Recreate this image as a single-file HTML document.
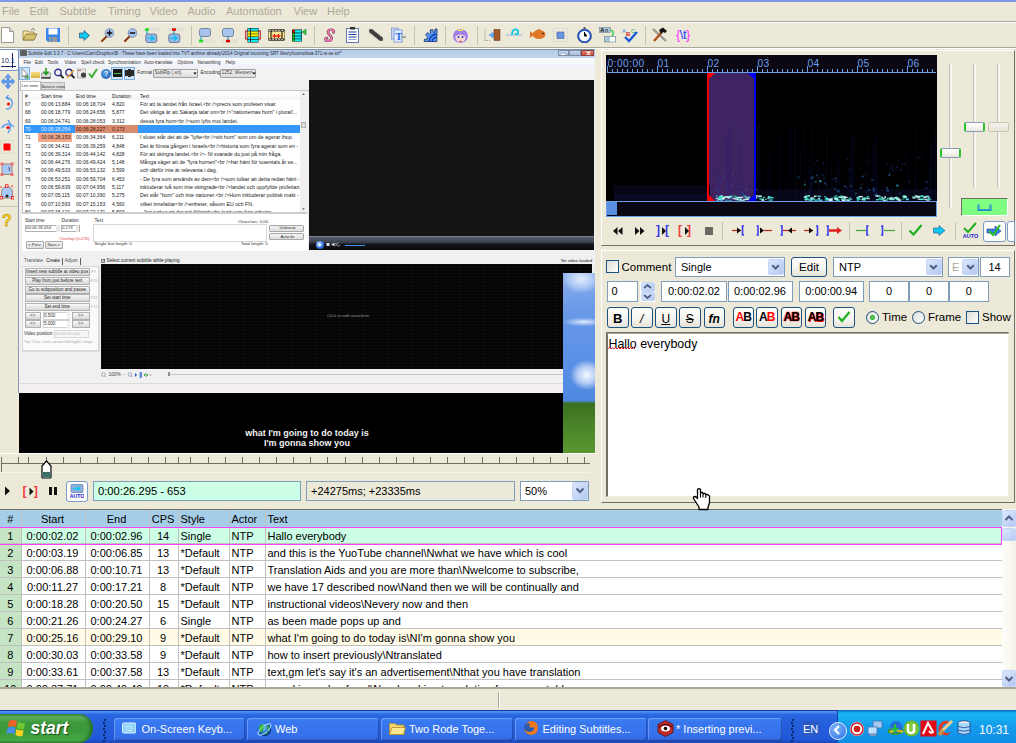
<!DOCTYPE html><html><head><meta charset="utf-8"><style>
html,body{margin:0;padding:0;width:1016px;height:743px;overflow:hidden;background:#ece9d8;font-family:"Liberation Sans",sans-serif;}
div{position:absolute;box-sizing:border-box;}
.t{white-space:nowrap;line-height:1;}
svg{position:absolute;}
</style></head><body>

<div style="left:0px;top:0px;width:1016px;height:2px;background:#7e9ae3"></div>
<div class="t" style="left:2px;top:6px;font-size:11px;color:#aca899">File</div>
<div class="t" style="left:29.5px;top:6px;font-size:11px;color:#aca899">Edit</div>
<div class="t" style="left:59.5px;top:6px;font-size:11px;color:#aca899">Subtitle</div>
<div class="t" style="left:108px;top:6px;font-size:11px;color:#aca899">Timing</div>
<div class="t" style="left:149.5px;top:6px;font-size:11px;color:#aca899">Video</div>
<div class="t" style="left:187.5px;top:6px;font-size:11px;color:#aca899">Audio</div>
<div class="t" style="left:226px;top:6px;font-size:11px;color:#aca899">Automation</div>
<div class="t" style="left:293.5px;top:6px;font-size:11px;color:#aca899">View</div>
<div class="t" style="left:327px;top:6px;font-size:11px;color:#aca899">Help</div>
<div style="left:0px;top:21px;width:1016px;height:1px;background:#aca899"></div>
<div style="left:0px;top:22px;width:1016px;height:1px;background:#fff"></div>
<div style="left:0px;top:47px;width:1016px;height:1px;background:#aca899"></div>
<div style="left:0px;top:48px;width:1016px;height:1px;background:#fff"></div>
<div style="left:68.0px;top:26px;width:1px;height:19px;background:#c5c2b2"></div>
<div style="left:190.5px;top:26px;width:1px;height:19px;background:#c5c2b2"></div>
<div style="left:313.5px;top:26px;width:1px;height:19px;background:#c5c2b2"></div>
<div style="left:413.5px;top:26px;width:1px;height:19px;background:#c5c2b2"></div>
<div style="left:445.0px;top:26px;width:1px;height:19px;background:#c5c2b2"></div>
<div style="left:476.5px;top:26px;width:1px;height:19px;background:#c5c2b2"></div>
<div style="left:645.0px;top:26px;width:1px;height:19px;background:#c5c2b2"></div>
<svg style="left:1px;top:27px" width="13" height="16" viewBox="0 0 13 16"><path d="M0.5 0.5H8.5L12.5 4.5V15.5H0.5Z" fill="#fff" stroke="#9c9a90"/><path d="M8.5 0.5V4.5H12.5" fill="#d8d8e0" stroke="#9c9a90"/></svg>
<svg style="left:22px;top:27px" width="16" height="15" viewBox="0 0 16 15"><path d="M1 4H6L7 5H12V13H1Z" fill="#f3e3a0" stroke="#8f7f40" stroke-width="0.8"/><path d="M1 13L4 7H15L12 13Z" fill="#d6c26e" stroke="#7f6f30" stroke-width="0.8"/><path d="M9 3Q11 0 13 3" fill="none" stroke="#555" stroke-width="0.8"/></svg>
<svg style="left:46px;top:28px" width="14" height="14" viewBox="0 0 14 14"><path d="M0 0H14V14H2L0 12Z" fill="#3c86f0"/><rect x="2.5" y="0.5" width="9" height="6" fill="#fff"/><rect x="3" y="9" width="8" height="5" fill="#9a9a9a"/><rect x="5" y="10" width="1.5" height="3" fill="#3c86f0"/></svg>
<svg style="left:79px;top:30px" width="11" height="11" viewBox="0 0 11 11"><path d="M0.5 3H5V0.5L10.5 5.5L5 10.5V8H0.5Z" fill="#10c8f0" stroke="#205080" stroke-width="0.7"/></svg>
<svg style="left:100px;top:28px" width="14" height="14" viewBox="0 0 14 14"><path d="M2 13L7 8" stroke="#8a3a10" stroke-width="2" stroke-linecap="round"/><circle cx="9.5" cy="5" r="4.3" fill="#a8c4ec" stroke="#6080b0" stroke-width="0.8"/><path d="M6.8 5H12.2" stroke="#000" stroke-width="1.4"/><path d="M9.5 2.3V7.7" stroke="#000" stroke-width="1.4"/></svg>
<svg style="left:123px;top:28px" width="14" height="14" viewBox="0 0 14 14"><path d="M2 13L7 8" stroke="#8a3a10" stroke-width="2" stroke-linecap="round"/><circle cx="9.5" cy="5" r="4.3" fill="#a8c4ec" stroke="#6080b0" stroke-width="0.8"/><path d="M6.8 5H12.2" stroke="#000" stroke-width="1.4"/></svg>
<svg style="left:145px;top:28px" width="16" height="15" viewBox="0 0 16 15"><rect x="0" y="0.5" width="15" height="2" fill="#e8e6de" stroke="#d0cec4" stroke-width="0.5"/><rect x="0" y="0.3" width="4" height="2.5" fill="#20e020"/><path d="M2 3V6" stroke="#10a0d0" stroke-width="1.2"/><rect x="0.8" y="6" width="11" height="8.5" rx="2" fill="#98b8e8" stroke="#506890" stroke-width="0.8"/><path d="M2.5 10.2H8M6 8L9 10.2L6 12.4" stroke="#10c0f0" stroke-width="1.6" fill="none"/></svg>
<svg style="left:168px;top:28px" width="16" height="15" viewBox="0 0 16 15"><rect x="0" y="0.5" width="15" height="2" fill="#e8e6de" stroke="#d0cec4" stroke-width="0.5"/><rect x="4" y="0.3" width="4" height="2.5" fill="#e00000"/><path d="M6 3V6" stroke="#10a0d0" stroke-width="1.2"/><rect x="0.8" y="6" width="11" height="8.5" rx="2" fill="#98b8e8" stroke="#506890" stroke-width="0.8"/><path d="M2.5 10.2H8M6 8L9 10.2L6 12.4" stroke="#10c0f0" stroke-width="1.6" fill="none"/></svg>
<svg style="left:199px;top:28px" width="16" height="15" viewBox="0 0 16 15"><rect x="0.5" y="0.5" width="11" height="8" rx="2" fill="#a8c4ee" stroke="#607090" stroke-width="0.8"/><path d="M2 8.5V12" stroke="#10a0d0" stroke-width="1.2"/><rect x="0" y="12" width="15" height="2" fill="#e8e6de" stroke="#d0cec4" stroke-width="0.5"/><rect x="0" y="11.8" width="4" height="2.5" fill="#20e020"/></svg>
<svg style="left:222px;top:28px" width="16" height="15" viewBox="0 0 16 15"><rect x="0.5" y="0.5" width="11" height="8" rx="2" fill="#a8c4ee" stroke="#607090" stroke-width="0.8"/><path d="M6 8.5V12" stroke="#10a0d0" stroke-width="1.2"/><rect x="0" y="12" width="15" height="2" fill="#e8e6de" stroke="#d0cec4" stroke-width="0.5"/><rect x="4" y="11.8" width="4" height="2.5" fill="#e00000"/></svg>
<svg style="left:245px;top:28px" width="16" height="15" viewBox="0 0 16 15"><rect x="0.7" y="3" width="14.6" height="8" fill="none" stroke="#b02020" stroke-width="1.1"/><rect x="2.5" y="0" width="11" height="14.5" fill="#111"/><g fill="#10e8f0"><rect x="3" y="0.5" width="2.2" height="2.3"/><rect x="6" y="0.5" width="7" height="2.3"/><rect x="3" y="9" width="2.2" height="2.2"/><rect x="6" y="9" width="7" height="2.2"/><rect x="3" y="11.8" width="2.2" height="2.2"/><rect x="6" y="11.8" width="7" height="2.2"/></g><g fill="#f8f000"><rect x="3" y="3.4" width="2.2" height="2.3"/><rect x="6" y="3.4" width="7" height="2.3"/><rect x="3" y="6.2" width="2.2" height="2.3"/><rect x="6" y="6.2" width="7" height="2.3"/></g></svg>
<svg style="left:268px;top:29px" width="17" height="12" viewBox="0 0 17 12"><rect x="0.5" y="0.5" width="16" height="11" rx="1" fill="#f8e890" stroke="#807050" stroke-width="0.8"/><rect x="0.5" y="0.5" width="16" height="2" fill="#333"/><rect x="0.5" y="9.5" width="16" height="2" fill="#333"/><g fill="#fff"><rect x="1.5" y="1" width="1.2" height="1"/><rect x="4.5" y="1" width="1.2" height="1"/><rect x="7.5" y="1" width="1.2" height="1"/><rect x="10.5" y="1" width="1.2" height="1"/><rect x="13.5" y="1" width="1.2" height="1"/><rect x="1.5" y="10" width="1.2" height="1"/><rect x="4.5" y="10" width="1.2" height="1"/><rect x="7.5" y="10" width="1.2" height="1"/><rect x="10.5" y="10" width="1.2" height="1"/><rect x="13.5" y="10" width="1.2" height="1"/></g><path d="M3 2V10M14 2V10" stroke="#000" stroke-width="1"/><path d="M4.5 7H12.5M6.5 5V9M10.5 5V9" stroke="#e02020" stroke-width="1.3"/></svg>
<svg style="left:291px;top:28px" width="16" height="14" viewBox="0 0 16 14"><rect x="1" y="1.5" width="10" height="12" fill="#111"/><g fill="#10e8f0"><rect x="4" y="2.2" width="6.5" height="2.4"/><rect x="4" y="5.3" width="6.5" height="2.4"/><rect x="4" y="8.4" width="6.5" height="2.2"/><rect x="4" y="11.2" width="6.5" height="2"/></g><g fill="#20e020"><rect x="1.5" y="5.3" width="2" height="2.4"/><rect x="1.5" y="8.4" width="2" height="2.2"/><rect x="1.5" y="11.2" width="2" height="2"/></g><rect x="1.5" y="2.2" width="2" height="2.4" fill="#f00"/><path d="M11 4L15 1V7Z" fill="#30d040" stroke="#106010" stroke-width="0.5"/></svg>
<svg style="left:324px;top:28px" width="12" height="14" viewBox="0 0 12 14"><path d="M9.5 4.5Q10.5 2 8 1.8Q4.2 1.5 4 4Q4 6 6 7.5Q8 9 7.5 11Q7 13 4 13Q1.5 13 1.5 11.5Q1.5 10 3 10" fill="none" stroke="#6a3a50" stroke-width="2.6" stroke-linecap="round"/><path d="M9.5 4.5Q10.5 2 8 1.8Q4.2 1.5 4 4Q4 6 6 7.5Q8 9 7.5 11Q7 13 4 13Q1.5 13 1.5 11.5Q1.5 10 3 10" fill="none" stroke="#f878b8" stroke-width="1.5" stroke-linecap="round"/></svg>
<svg style="left:346px;top:27px" width="13" height="16" viewBox="0 0 13 16"><rect x="0.5" y="1.5" width="12" height="14" fill="#fff" stroke="#5070a8" stroke-width="0.9"/><rect x="4" y="0" width="5" height="2.5" fill="#333"/><g stroke="#1840a0" stroke-width="1.2"><path d="M2.5 5H10.5M2.5 7.5H10.5M2.5 10H10.5"/></g><path d="M2.5 12.5H10.5" stroke="#8098c8" stroke-width="0.8"/></svg>
<svg style="left:369px;top:29px" width="14" height="12" viewBox="0 0 14 12"><path d="M2 2L12 10" stroke="#555" stroke-width="4.5" stroke-linecap="round"/><path d="M2 2L12 10" stroke="#222" stroke-width="2.5" stroke-dasharray="1 1"/></svg>
<svg style="left:391px;top:27px" width="16" height="16" viewBox="0 0 16 16"><rect x="0.5" y="1" width="7" height="11" fill="#c8d8f0" stroke="#7090c0" stroke-width="0.7"/><rect x="3" y="3" width="8" height="12" fill="#e0ecff" stroke="#6088d0" stroke-width="0.7"/><text x="4.5" y="13" font-family="Liberation Serif" font-weight="bold" font-size="10" fill="#2060e0">T</text><path d="M10 10H15" stroke="#909090" stroke-width="1.5"/></svg>
<svg style="left:423px;top:28px" width="15" height="14" viewBox="0 0 15 14"><path d="M13.8 13.5H1.2V11.5L4.5 10.8L4.2 8.5L2.5 6.8L4.6 4.6L6.6 6.1L7.6 5.2L7.2 2L9.6 1.5L10.5 4.6L11.6 4.3L12 1H14Z" fill="#5898f8" stroke="#1a2a60" stroke-width="0.8" stroke-linejoin="round"/><path d="M6.2 13.5A7.3 7.3 0 0 1 13.6 6.2" fill="none" stroke="#0a3ab0" stroke-width="1.6"/><path d="M9.2 13.5A4.3 4.3 0 0 1 13.6 9.2" fill="none" stroke="#0a3ab0" stroke-width="1.4"/></svg>
<svg style="left:452px;top:27px" width="17" height="16" viewBox="0 0 17 16"><ellipse cx="8.5" cy="9" rx="7.5" ry="7" fill="#a080e8"/><ellipse cx="8.5" cy="10.5" rx="5" ry="4.8" fill="#f8d8d0"/><path d="M3.5 7 Q8.5 3 13.5 7 L13 9 Q8.5 6 4 9Z" fill="#a080e8"/><circle cx="6.5" cy="10" r="1" fill="#2040c0"/><circle cx="10.5" cy="10" r="1" fill="#2040c0"/><path d="M5 1L8.5 3L12 1L11 4H6Z" fill="#f0e060"/><path d="M7 15L8.5 13.5L10 15" fill="#c02020"/></svg>
<svg style="left:484px;top:29px" width="17" height="12" viewBox="0 0 17 12"><path d="M1 0.5V11.5M1 11.5H6" stroke="#808080" stroke-width="0.8" stroke-dasharray="1 1" fill="none"/><path d="M5 6H9M7.5 3.5L10 6L7.5 8.5" stroke="#60a8f0" stroke-width="2" fill="none"/><rect x="10" y="0.5" width="6" height="11" fill="#a05a28" stroke="#603010" stroke-width="0.5"/></svg>
<svg style="left:506px;top:28px" width="17" height="11" viewBox="0 0 17 11"><path d="M0 7H16" stroke="#7aa8e8" stroke-width="0.8"/><path d="M6 7Q6 1 10 1.5Q13 2 12 5Q11 7 9 5.5" fill="none" stroke="#10c8e0" stroke-width="1.8"/></svg>
<svg style="left:530px;top:29px" width="16" height="11" viewBox="0 0 16 11"><path d="M0 2L4 5.5L0 9Z" fill="#e07020"/><ellipse cx="9" cy="5.5" rx="6.5" ry="4.5" fill="#e07828"/><path d="M6 1L10 0L11 2Z" fill="#e07020"/><circle cx="13" cy="4.5" r="0.8" fill="#000"/></svg>
<svg style="left:553px;top:28px" width="15" height="14" viewBox="0 0 15 14"><rect x="0.5" y="0.5" width="14" height="13" fill="none" stroke="#c8c8c8" stroke-width="0.8" stroke-dasharray="1.2 1.2"/><rect x="4" y="4" width="7" height="6.5" fill="#6a96e0" stroke="#40609a" stroke-width="0.6"/></svg>
<svg style="left:577px;top:27px" width="15" height="16" viewBox="0 0 15 16"><rect x="6.5" y="0" width="2" height="2" fill="#606060"/><circle cx="7.5" cy="9" r="6.2" fill="#fff" stroke="#1e5ae0" stroke-width="1.8"/><circle cx="7.5" cy="9" r="7" fill="none" stroke="#303030" stroke-width="0.5"/><path d="M7.5 5V9H10" stroke="#000" stroke-width="1"/></svg>
<svg style="left:599px;top:26px" width="17" height="17" viewBox="0 0 17 17"><rect x="0.5" y="1.5" width="11" height="5" fill="#a8c8d8" stroke="#607080" stroke-width="0.5"/><text x="1.2" y="6" font-family="Liberation Sans" font-weight="bold" font-size="5.5" fill="#000">A</text><text x="6" y="6" font-family="Liberation Sans" font-size="5.5" fill="#000">n</text><path d="M12 4Q16 6 13 10" stroke="#20d040" stroke-width="1.3" fill="none"/><rect x="5.5" y="10.5" width="11" height="5.5" fill="#a8c8d8" stroke="#607080" stroke-width="0.5"/><rect x="11" y="11" width="5" height="4.5" fill="#fff"/></svg>
<svg style="left:622px;top:27px" width="16" height="16" viewBox="0 0 16 16"><text x="0" y="6" font-family="Liberation Sans" font-size="6" fill="#4090f0">A</text><text x="4" y="9" font-family="Liberation Sans" font-weight="bold" font-size="6" fill="#e02020">B</text><text x="9" y="5.5" font-family="Liberation Sans" font-size="6" fill="#20b040">C</text><path d="M3 10L7 14L15 5" stroke="#1e5ad8" stroke-width="2.4" fill="none"/></svg>
<svg style="left:652px;top:27px" width="16" height="16" viewBox="0 0 16 16"><path d="M1 2L14 14" stroke="#808080" stroke-width="2.2"/><path d="M1 2L14 14" stroke="#c0c0c0" stroke-width="0.8"/><path d="M2 14L10 5" stroke="#b05010" stroke-width="2.2"/><path d="M7 3L11 0.5L15 4L13 6L11 5L9 7Z" fill="#111"/></svg>
<div class="t" style="left:676px;top:28px;font-size:13px;color:#ff30ff;letter-spacing:-0.5px">{<span style="color:#2040ff">\t</span>}</div>
<div style="left:19px;top:49px;width:576px;height:404px;background:#f0f0f0"></div>
<div style="left:18px;top:49px;width:1px;height:344px;background:#8a9ab0"></div>
<div style="left:19px;top:49px;width:576px;height:9px;background:linear-gradient(#b4c8e2,#c4d6ec)"></div>
<div style="left:19px;top:49px;width:576px;height:1px;background:#7890b0"></div>
<div style="left:20px;top:50px;width:7px;height:6px;background:#606060;border-radius:1px"></div>
<div class="t" style="left:28px;top:51.5px;font-size:4.5px;color:#1a2a40">Subtitle Edit 3.3.7 - C:\Users\Cam\Dropbox\B - These have been loaded into TVT archive already\2014 Original incoming SRT files\yt\uomolista-371-w-se.srt*</div>
<div style="left:558px;top:50px;width:11px;height:6px;background:linear-gradient(#c8d8ea,#a8bcd8);border:0.5px solid #8090a8"></div>
<div style="left:561px;top:53.5px;width:4px;height:1px;background:#fff"></div>
<div style="left:569px;top:50px;width:12px;height:6px;background:linear-gradient(#c8d8ea,#a8bcd8);border:0.5px solid #8090a8"></div>
<div style="left:581px;top:50px;width:13px;height:6px;background:linear-gradient(#e08878,#c84838);border:0.5px solid #904040"></div>
<svg style="left:585.5px;top:50.8px" width="5" height="4.5" viewBox="0 0 5 4.5"><path d="M0.8 0.5L4.2 4M4.2 0.5L0.8 4" stroke="#fff" stroke-width="1.1"/></svg>
<div style="left:19px;top:58px;width:576px;height:9px;background:linear-gradient(#fbfcfe,#eef2f8)"></div>
<div class="t" style="left:23.5px;top:60.5px;font-size:4.6px;color:#303030">File</div>
<div class="t" style="left:35px;top:60.5px;font-size:4.6px;color:#303030">Edit</div>
<div class="t" style="left:47.5px;top:60.5px;font-size:4.6px;color:#303030">Tools</div>
<div class="t" style="left:64.5px;top:60.5px;font-size:4.6px;color:#303030">Video</div>
<div class="t" style="left:81px;top:60.5px;font-size:4.6px;color:#303030">Spell check</div>
<div class="t" style="left:108px;top:60.5px;font-size:4.6px;color:#303030">Synchronization</div>
<div class="t" style="left:144px;top:60.5px;font-size:4.6px;color:#303030">Auto-translate</div>
<div class="t" style="left:177.5px;top:60.5px;font-size:4.6px;color:#303030">Options</div>
<div class="t" style="left:197.5px;top:60.5px;font-size:4.6px;color:#303030">Networking</div>
<div class="t" style="left:225.5px;top:60.5px;font-size:4.6px;color:#303030">Help</div>
<div style="left:19px;top:67px;width:576px;height:14px;background:#f2f2f2"></div>
<div style="left:19px;top:67px;width:11px;height:13px;background:#cfe4f8;border:0.5px solid #80b0e0"></div>
<svg style="left:21px;top:68px" width="8" height="11" viewBox="0 0 8 11"><path d="M1 0.5V9L3 7.5L4.5 10.5L5.5 10L4 7H7Z" fill="#fff" stroke="#404040" stroke-width="0.5"/><circle cx="6" cy="9" r="1.8" fill="#40a840"/></svg>
<div style="left:31px;top:72px;width:9px;height:6px;background:linear-gradient(#f8e080,#d8b040);border-radius:0.5px"></div>
<svg style="left:41px;top:68px" width="10" height="11" viewBox="0 0 10 11"><rect x="0.5" y="5" width="9" height="5.5" fill="#d8d8d8" stroke="#606060" stroke-width="0.5"/><path d="M5 0V6M2.5 3.5L5 6.5L7.5 3.5" stroke="#20a020" stroke-width="1.6" fill="none"/><rect x="0.5" y="9" width="9" height="1.5" fill="#404040"/></svg>
<svg style="left:54px;top:68px" width="10" height="11" viewBox="0 0 10 11"><circle cx="4" cy="4.5" r="3.2" fill="none" stroke="#303090" stroke-width="1.4"/><path d="M6.5 7L9.5 10" stroke="#202020" stroke-width="1.8"/></svg>
<svg style="left:65px;top:68px" width="10" height="11" viewBox="0 0 10 11"><circle cx="4" cy="4.5" r="3.2" fill="none" stroke="#303090" stroke-width="1.4"/><path d="M6.5 7L9.5 10" stroke="#202020" stroke-width="1.8"/><path d="M2 10L9 2" stroke="#f0a030" stroke-width="1.2"/></svg>
<svg style="left:77px;top:68px" width="10" height="11" viewBox="0 0 10 11"><rect x="0.5" y="1" width="8" height="9" fill="#e8e8e8" stroke="#808080" stroke-width="0.5"/><circle cx="6.5" cy="7" r="2.6" fill="#404040"/><path d="M1 2.5H4" stroke="#c04040" stroke-width="0.8"/></svg>
<svg style="left:88px;top:68px" width="10" height="11" viewBox="0 0 10 11"><path d="M1 5.5L3.8 9L9 1" stroke="#40b030" stroke-width="2" fill="none"/></svg>
<div style="left:101px;top:68.5px;width:9.5px;height:10px;background:radial-gradient(circle at 40% 35%,#5aa0e8,#1a5aa8);border-radius:50%"></div>
<div class="t" style="left:104px;top:70px;font-size:7px;color:#fff;font-weight:bold">?</div>
<div style="left:111px;top:67px;width:12px;height:13px;background:#cfe4f8;border:0.5px solid #80b0e0"></div>
<div style="left:113px;top:69px;width:9px;height:8px;background:#1a1a1a"></div>
<div style="left:114px;top:73px;width:7px;height:1px;background:#40c040"></div>
<div style="left:123.5px;top:67px;width:11px;height:13px;background:#cfe4f8;border:0.5px solid #80b0e0"></div>
<div style="left:125px;top:69px;width:8.5px;height:8px;background:#2a2a2a;border-top:1.5px dashed #ddd;border-bottom:1.5px dashed #ddd"></div>
<div class="t" style="left:137px;top:71px;font-size:4.8px;color:#303030">Format</div>
<div style="left:152.5px;top:68.5px;width:45px;height:9.5px;background:linear-gradient(#f4f4f4,#dcdcdc);border:0.5px solid #a0a0a0;border-radius:1px"></div>
<div class="t" style="left:154.5px;top:71px;font-size:4.8px;color:#404040">SubRip (.srt)</div>
<svg style="left:193px;top:72px" width="4" height="3" viewBox="0 0 4 3"><path d="M0.3 0.5H3.7L2 2.5Z" fill="#000"/></svg>
<div class="t" style="left:200.5px;top:71px;font-size:4.8px;color:#303030">Encoding</div>
<div style="left:219.5px;top:68.5px;width:36.5px;height:9.5px;background:linear-gradient(#f4f4f4,#dcdcdc);border:0.5px solid #a0a0a0;border-radius:1px"></div>
<div class="t" style="left:221.5px;top:71px;font-size:4.8px;color:#404040">1252: Western</div>
<svg style="left:251.5px;top:72px" width="4" height="3" viewBox="0 0 4 3"><path d="M0.3 0.5H3.7L2 2.5Z" fill="#000"/></svg>
<div style="left:19px;top:81px;width:290px;height:9px;background:#f0f0f0"></div>
<div style="left:20px;top:81px;width:20.5px;height:9px;background:#fff;border:0.5px solid #c0c0c0;border-bottom:none"></div>
<div class="t" style="left:21.5px;top:83.5px;font-size:4.3px;color:#303030">List view</div>
<div style="left:40.5px;top:82px;width:24px;height:8px;background:#dcdcdc;border:0.5px solid #b8b8b8"></div>
<div class="t" style="left:41.5px;top:84.5px;font-size:4.3px;color:#303030">Source view</div>
<div style="left:19px;top:89.5px;width:290px;height:0.6px;background:#c8c8c8"></div>
<div style="left:22px;top:90px;width:284px;height:123px;background:#fff;border:0.5px solid #c8c8c8"></div>
<div style="left:23px;top:91px;width:277px;height:9px;background:linear-gradient(#fff,#f4f4f6)"></div>
<div class="t" style="left:25px;top:93.5px;font-size:5px;color:#222">#</div>
<div class="t" style="left:41px;top:93.5px;font-size:5px;color:#222">Start time</div>
<div class="t" style="left:76px;top:93.5px;font-size:5px;color:#222">End time</div>
<div class="t" style="left:112px;top:93.5px;font-size:5px;color:#222">Duration</div>
<div class="t" style="left:140px;top:93.5px;font-size:5px;color:#222">Text</div>
<div style="left:23px;top:100px;width:277px;height:112px;overflow:hidden">
<div class="t" style="left:2px;top:2.0px;font-size:5px;color:#222">67</div>
<div class="t" style="left:18px;top:2.0px;font-size:5px;color:#222">00:06:13,884</div>
<div class="t" style="left:53px;top:2.0px;font-size:5px;color:#222">00:06:18,704</div>
<div class="t" style="left:89px;top:2.0px;font-size:5px;color:#222">4,820</div>
<div class="t" style="left:117px;top:2.0px;font-size:5.25px;color:#222">För att ta landet från Israel,&lt;br /&gt;precis som profeten visar.</div>
<div class="t" style="left:2px;top:10.31px;font-size:5px;color:#222">68</div>
<div class="t" style="left:18px;top:10.31px;font-size:5px;color:#222">00:06:18,779</div>
<div class="t" style="left:53px;top:10.31px;font-size:5px;color:#222">00:06:24,656</div>
<div class="t" style="left:89px;top:10.31px;font-size:5px;color:#222">5,877</div>
<div class="t" style="left:117px;top:10.31px;font-size:5.25px;color:#222">Det viktiga är att Sakarja talar om&lt;br /&gt;"nationernas horn" i plural!...</div>
<div class="t" style="left:2px;top:18.62px;font-size:5px;color:#222">69</div>
<div class="t" style="left:18px;top:18.62px;font-size:5px;color:#222">00:06:24,741</div>
<div class="t" style="left:53px;top:18.62px;font-size:5px;color:#222">00:06:28,053</div>
<div class="t" style="left:89px;top:18.62px;font-size:5px;color:#222">3,312</div>
<div class="t" style="left:117px;top:18.62px;font-size:5.25px;color:#222">dessa fyra horn&lt;br /&gt;som lyfts mot landet.</div>
<div style="left:1px;top:24.93px;width:276px;height:8.3px;background:#3399ff"></div>
<div style="left:52px;top:24.93px;width:35px;height:8.3px;background:#d98b70"></div>
<div style="left:87px;top:24.93px;width:28px;height:8.3px;background:#d98b70"></div>
<div class="t" style="left:2px;top:26.93px;font-size:5px;color:#e8f0ff">70</div>
<div class="t" style="left:18px;top:26.93px;font-size:5px;color:#e8f0ff">00:06:28,054</div>
<div class="t" style="left:53px;top:26.93px;font-size:5px;color:#402010">00:06:28,227</div>
<div class="t" style="left:89px;top:26.93px;font-size:5px;color:#402010">0,173</div>
<div class="t" style="left:117px;top:26.93px;font-size:5.25px;color:#e8f0ff"></div>
<div style="left:15px;top:33.24px;width:34px;height:8.3px;background:#f4a888"></div>
<div class="t" style="left:2px;top:35.24px;font-size:5px;color:#222">71</div>
<div class="t" style="left:18px;top:35.24px;font-size:5px;color:#222">00:06:28,153</div>
<div class="t" style="left:53px;top:35.24px;font-size:5px;color:#222">00:06:34,364</div>
<div class="t" style="left:89px;top:35.24px;font-size:5px;color:#222">6,211</div>
<div class="t" style="left:117px;top:35.24px;font-size:5.25px;color:#222">I slutet står det att de "lyfte&lt;br /&gt;sitt horn" som om de agerar ihop.</div>
<div class="t" style="left:2px;top:43.550000000000004px;font-size:5px;color:#222">72</div>
<div class="t" style="left:18px;top:43.550000000000004px;font-size:5px;color:#222">00:06:34,411</div>
<div class="t" style="left:53px;top:43.550000000000004px;font-size:5px;color:#222">00:06:39,259</div>
<div class="t" style="left:89px;top:43.550000000000004px;font-size:5px;color:#222">4,848</div>
<div class="t" style="left:117px;top:43.550000000000004px;font-size:5.25px;color:#222">Det är första gången i Israels&lt;br /&gt;historia som fyra agerar som en -</div>
<div class="t" style="left:2px;top:51.86px;font-size:5px;color:#222">73</div>
<div class="t" style="left:18px;top:51.86px;font-size:5px;color:#222">00:06:39,314</div>
<div class="t" style="left:53px;top:51.86px;font-size:5px;color:#222">00:06:44,142</div>
<div class="t" style="left:89px;top:51.86px;font-size:5px;color:#222">4,828</div>
<div class="t" style="left:117px;top:51.86px;font-size:5.25px;color:#222">För att skingra landet.&lt;br /&gt;- Ni svarade du just på min fråga.</div>
<div class="t" style="left:2px;top:60.17px;font-size:5px;color:#222">74</div>
<div class="t" style="left:18px;top:60.17px;font-size:5px;color:#222">00:06:44,276</div>
<div class="t" style="left:53px;top:60.17px;font-size:5px;color:#222">00:06:49,424</div>
<div class="t" style="left:89px;top:60.17px;font-size:5px;color:#222">5,148</div>
<div class="t" style="left:117px;top:60.17px;font-size:5.25px;color:#222">Många säger att de "fyra hornen"&lt;br /&gt;har hänt för tusentals år se...</div>
<div class="t" style="left:2px;top:68.48px;font-size:5px;color:#222">75</div>
<div class="t" style="left:18px;top:68.48px;font-size:5px;color:#222">00:06:49,533</div>
<div class="t" style="left:53px;top:68.48px;font-size:5px;color:#222">00:06:53,132</div>
<div class="t" style="left:89px;top:68.48px;font-size:5px;color:#222">3,599</div>
<div class="t" style="left:117px;top:68.48px;font-size:5.25px;color:#222">och därför inte är relevanta i dag.</div>
<div class="t" style="left:2px;top:76.79px;font-size:5px;color:#222">76</div>
<div class="t" style="left:18px;top:76.79px;font-size:5px;color:#222">00:06:53,251</div>
<div class="t" style="left:53px;top:76.79px;font-size:5px;color:#222">00:06:59,704</div>
<div class="t" style="left:89px;top:76.79px;font-size:5px;color:#222">6,453</div>
<div class="t" style="left:117px;top:76.79px;font-size:5.25px;color:#222">- De fyra som används av dem&lt;br /&gt;som tolkar att detta redan hänt -</div>
<div class="t" style="left:2px;top:85.10000000000001px;font-size:5px;color:#222">77</div>
<div class="t" style="left:18px;top:85.10000000000001px;font-size:5px;color:#222">00:06:59,839</div>
<div class="t" style="left:53px;top:85.10000000000001px;font-size:5px;color:#222">00:07:04,956</div>
<div class="t" style="left:89px;top:85.10000000000001px;font-size:5px;color:#222">5,117</div>
<div class="t" style="left:117px;top:85.10000000000001px;font-size:5.25px;color:#222">inkluderar två som inte skingrade&lt;br /&gt;landet och uppfyllde profetian.</div>
<div class="t" style="left:2px;top:93.41000000000001px;font-size:5px;color:#222">78</div>
<div class="t" style="left:18px;top:93.41000000000001px;font-size:5px;color:#222">00:07:05,115</div>
<div class="t" style="left:53px;top:93.41000000000001px;font-size:5px;color:#222">00:07:10,390</div>
<div class="t" style="left:89px;top:93.41000000000001px;font-size:5px;color:#222">5,275</div>
<div class="t" style="left:117px;top:93.41000000000001px;font-size:5.25px;color:#222">Det står "horn" och inte nationer.&lt;br /&gt;Horn inkluderar politisk makt -</div>
<div class="t" style="left:2px;top:101.72px;font-size:5px;color:#222">79</div>
<div class="t" style="left:18px;top:101.72px;font-size:5px;color:#222">00:07:10,593</div>
<div class="t" style="left:53px;top:101.72px;font-size:5px;color:#222">00:07:15,153</div>
<div class="t" style="left:89px;top:101.72px;font-size:5px;color:#222">4,560</div>
<div class="t" style="left:117px;top:101.72px;font-size:5.25px;color:#222">vilket innefattar&lt;br /&gt;enheter, såsom EU och FN.</div>
<div class="t" style="left:2px;top:110.03px;font-size:5px;color:#222">80</div>
<div class="t" style="left:18px;top:110.03px;font-size:5px;color:#222">00:07:15,121</div>
<div class="t" style="left:53px;top:110.03px;font-size:5px;color:#222">00:07:22,171</div>
<div class="t" style="left:89px;top:110.03px;font-size:5px;color:#222">5,593</div>
<div class="t" style="left:117px;top:110.03px;font-size:5.25px;color:#222">- Jag tycker att det mä följande&lt;br /&gt;att som fyra arbetar</div>
</div>
<div style="left:300px;top:91px;width:5.5px;height:121px;background:#f0f0f0"></div>
<svg style="left:301.5px;top:93px" width="3" height="2.5" viewBox="0 0 3 2.5"><path d="M0.2 2H2.8L1.5 0.3Z" fill="#606060"/></svg>
<svg style="left:301.5px;top:207.5px" width="3" height="2.5" viewBox="0 0 3 2.5"><path d="M0.2 0.3H2.8L1.5 2Z" fill="#606060"/></svg>
<div style="left:300.5px;top:122px;width:5px;height:6px;background:#dcdcdc;border:0.5px solid #b0b0b0"></div>
<div style="left:22px;top:213px;width:286px;height:38px;background:#fff;border-top:0.5px solid #d0d0d0"></div>
<div class="t" style="left:25px;top:219px;font-size:4.6px;color:#303030">Start time</div>
<div class="t" style="left:61.5px;top:219px;font-size:4.6px;color:#303030">Duration</div>
<div style="left:25px;top:224.5px;width:35px;height:7.5px;background:#fff;border:0.5px solid #b0b0b0"></div>
<div class="t" style="left:26px;top:226.3px;font-size:4.3px;color:#303030">00:06:28,054</div>
<div style="left:56px;top:225px;width:3.5px;height:6.5px;background:#e8e8e8"></div>
<div style="left:61px;top:224.5px;width:19px;height:7.5px;background:#fff;border:0.5px solid #b0b0b0"></div>
<div class="t" style="left:62px;top:226.3px;font-size:4.3px;color:#303030">0,173</div>
<div style="left:75.5px;top:225px;width:3.5px;height:6.5px;background:#e8e8e8"></div>
<div class="t" style="left:94.5px;top:219px;font-size:4.6px;color:#303030">Text</div>
<div style="left:93px;top:223.5px;width:174px;height:18.5px;background:#fff;border:0.5px solid #d8d8d8"></div>
<div class="t" style="left:238px;top:219.5px;font-size:4.3px;color:#303030">Chars/sec: 0,00</div>
<div style="left:269px;top:224.5px;width:35px;height:7px;background:linear-gradient(#f4f4f4,#dedede);border:0.5px solid #a8a8a8;border-radius:1px"></div>
<div class="t" style="left:279.5px;top:226.3px;font-size:4.3px;color:#303030">Unbreak</div>
<div style="left:269px;top:233px;width:35px;height:7px;background:linear-gradient(#f4f4f4,#dedede);border:0.5px solid #a8a8a8;border-radius:1px"></div>
<div class="t" style="left:280.5px;top:234.8px;font-size:4.3px;color:#303030">Auto br</div>
<div class="t" style="left:59.5px;top:237px;font-size:4.3px;color:#e04040">Overlap (0,074)</div>
<div style="left:25.5px;top:240.5px;width:18px;height:8px;background:linear-gradient(#f4f4f4,#dedede);border:0.5px solid #a8a8a8;border-radius:1px"></div>
<div class="t" style="left:28px;top:242.5px;font-size:4.3px;color:#303030">&lt; Prev</div>
<div style="left:45px;top:240.5px;width:18px;height:8px;background:linear-gradient(#f4f4f4,#dedede);border:0.5px solid #a8a8a8;border-radius:1px"></div>
<div class="t" style="left:47.5px;top:242.5px;font-size:4.3px;color:#303030">Next &gt;</div>
<div class="t" style="left:94.5px;top:242px;font-size:4.3px;color:#303030">Single line length: 0</div>
<div class="t" style="left:241px;top:242px;font-size:4.3px;color:#303030">Total length: 0</div>
<div style="left:22px;top:250.5px;width:286px;height:0.6px;background:#c8c8c8"></div>
<div style="left:309px;top:80px;width:285px;height:170px;background:#141414"></div>
<div style="left:309px;top:236px;width:285px;height:14px;background:linear-gradient(#5a6274,#3a404c 45%,#14161a 60%,#0a0a0c)"></div>
<div style="left:309px;top:236px;width:285px;height:1px;background:#7a8090"></div>
<div style="left:316px;top:241px;width:7.5px;height:7.5px;background:radial-gradient(circle at 40% 35%,#c0e0ff,#2a6ae0 60%,#1040a0);border-radius:50%"></div>
<svg style="left:318.2px;top:243px" width="4" height="4" viewBox="0 0 4 4"><path d="M0.5 0.3L3.8 2L0.5 3.7Z" fill="#fff"/></svg>
<svg style="left:326px;top:242px" width="15" height="5" viewBox="0 0 15 5"><rect x="0.5" y="1" width="3" height="3" fill="#e0e0e0"/><path d="M5.5 1.8H6.8L8.5 0.5V4.5L6.8 3.2H5.5Z" fill="#e0e0e0"/><path d="M9.5 1.2Q10.3 2.5 9.5 3.8" stroke="#e0e0e0" stroke-width="0.5" fill="none"/><path d="M13.8 2.5A1.6 1.6 0 1 1 12.5 0.9" stroke="#e0e0e0" stroke-width="0.6" fill="none"/></svg>
<div style="left:345px;top:244.5px;width:20px;height:0.8px;background:#4090f0"></div>
<div style="left:19px;top:251px;width:576px;height:142px;background:#f0f0f0"></div>
<div class="t" style="left:24px;top:259px;font-size:4.6px;color:#505050">Translate</div>
<div class="t" style="left:46.3px;top:259px;font-size:4.6px;color:#101010">Create</div>
<div style="left:62.4px;top:257.5px;width:0.6px;height:7px;background:#606060"></div>
<div class="t" style="left:64.8px;top:259px;font-size:4.6px;color:#505050">Adjust</div>
<div style="left:79.6px;top:257.5px;width:0.6px;height:7px;background:#606060"></div>
<div style="left:101.2px;top:258.5px;width:4px;height:4px;background:#fff;border:0.5px solid #808080"></div>
<svg style="left:101.7px;top:259px" width="3" height="3" viewBox="0 0 3 3"><path d="M0.3 1.5L1.2 2.5L2.7 0.3" stroke="#203060" stroke-width="0.6" fill="none"/></svg>
<div class="t" style="left:106.5px;top:259px;font-size:4.7px;color:#202020">Select current subtitle while playing</div>
<div class="t" style="left:561px;top:259px;font-size:4.3px;color:#202020">No video loaded</div>
<div style="left:22px;top:266px;width:77px;height:85px;background:#fafafa;border:0.5px solid #d8d8d8;box-shadow:0.5px 0.5px 0 #c8c8c8"></div>
<div style="left:24.5px;top:268.3px;width:65.5px;height:8px;background:linear-gradient(#f8f8f8,#e8e8e8 50%,#d8d8d8);border:0.5px solid #b0b0b0;border-radius:0.7px"></div>
<div class="t" style="left:24.5px;top:270.2px;width:65.5px;text-align:center;font-size:4.5px;color:#202020">Insert new subtitle at video pos</div>
<div class="t" style="left:91px;top:270.3px;font-size:4px;color:#b0b0b0">F9</div>
<div style="left:24.5px;top:277px;width:65.5px;height:8px;background:linear-gradient(#f8f8f8,#e8e8e8 50%,#d8d8d8);border:0.5px solid #b0b0b0;border-radius:0.7px"></div>
<div class="t" style="left:24.5px;top:278.9px;width:65.5px;text-align:center;font-size:4.5px;color:#202020">Play from just before text</div>
<div class="t" style="left:91px;top:279px;font-size:4px;color:#b0b0b0">F10</div>
<div style="left:24.5px;top:285.7px;width:65.5px;height:8px;background:linear-gradient(#f8f8f8,#e8e8e8 50%,#d8d8d8);border:0.5px solid #b0b0b0;border-radius:0.7px"></div>
<div class="t" style="left:24.5px;top:287.59999999999997px;width:65.5px;text-align:center;font-size:4.5px;color:#202020">Go to subposition and pause</div>
<div style="left:24.5px;top:294.4px;width:65.5px;height:8px;background:linear-gradient(#f8f8f8,#e8e8e8 50%,#d8d8d8);border:0.5px solid #b0b0b0;border-radius:0.7px"></div>
<div class="t" style="left:24.5px;top:296.29999999999995px;width:65.5px;text-align:center;font-size:4.5px;color:#202020">Set start time</div>
<div class="t" style="left:91px;top:296.4px;font-size:4px;color:#b0b0b0">F11</div>
<div style="left:24.5px;top:303.1px;width:65.5px;height:8px;background:linear-gradient(#f8f8f8,#e8e8e8 50%,#d8d8d8);border:0.5px solid #b0b0b0;border-radius:0.7px"></div>
<div class="t" style="left:24.5px;top:305.0px;width:65.5px;text-align:center;font-size:4.5px;color:#202020">Set end time</div>
<div class="t" style="left:91px;top:305.1px;font-size:4px;color:#b0b0b0">F12</div>
<div style="left:24.5px;top:311.5px;width:16.5px;height:8px;background:linear-gradient(#f8f8f8,#e8e8e8 50%,#d8d8d8);border:0.5px solid #b0b0b0"></div>
<div class="t" style="left:30px;top:313.5px;font-size:4.5px;color:#303030">&lt;&lt;</div>
<div style="left:43.3px;top:311.5px;width:27.2px;height:8px;background:#fff;border:0.5px solid #d0d0d0"></div>
<div class="t" style="left:44px;top:313.5px;font-size:4.5px;color:#303030">0,500</div>
<div style="left:67px;top:312.0px;width:3px;height:7px;background:#f0f0f0"></div>
<div style="left:72.3px;top:311.5px;width:17.6px;height:8px;background:linear-gradient(#f8f8f8,#e8e8e8 50%,#d8d8d8);border:0.5px solid #b0b0b0"></div>
<div class="t" style="left:78px;top:313.5px;font-size:4.5px;color:#303030">&gt;&gt;</div>
<div style="left:24.5px;top:320.3px;width:16.5px;height:8px;background:linear-gradient(#f8f8f8,#e8e8e8 50%,#d8d8d8);border:0.5px solid #b0b0b0"></div>
<div class="t" style="left:30px;top:322.3px;font-size:4.5px;color:#303030">&lt;&lt;</div>
<div style="left:43.3px;top:320.3px;width:27.2px;height:8px;background:#fff;border:0.5px solid #d0d0d0"></div>
<div class="t" style="left:44px;top:322.3px;font-size:4.5px;color:#303030">5,000</div>
<div style="left:67px;top:320.8px;width:3px;height:7px;background:#f0f0f0"></div>
<div style="left:72.3px;top:320.3px;width:17.6px;height:8px;background:linear-gradient(#f8f8f8,#e8e8e8 50%,#d8d8d8);border:0.5px solid #b0b0b0"></div>
<div class="t" style="left:78px;top:322.3px;font-size:4.5px;color:#303030">&gt;&gt;</div>
<div class="t" style="left:24px;top:332.3px;font-size:4.5px;color:#303030">Video position:</div>
<div style="left:54px;top:330px;width:34.7px;height:8px;background:#f6f6f6;border:0.5px solid #d8d8d8"></div>
<div class="t" style="left:55px;top:332.3px;font-size:4.3px;color:#b8b8b8">00:00:00,000</div>
<div class="t" style="left:24px;top:340.3px;font-size:4.4px;color:#a8a8a8">Tip: Use &lt;ctrl+arrow left/right&gt; keys</div>
<div style="left:101px;top:264px;width:491px;height:105px;background:#040404;background-image:linear-gradient(rgba(28,28,28,.22) 1px,transparent 1px),linear-gradient(90deg,rgba(28,28,28,.22) 1px,transparent 1px);background-size:3px 3px"></div>
<div class="t" style="left:327px;top:314px;font-size:4.3px;color:#909090">Click to add waveform</div>
<svg style="left:101px;top:372px" width="70" height="6" viewBox="0 0 70 6"><circle cx="2.5" cy="2.5" r="1.8" fill="none" stroke="#8090a0" stroke-width="0.7"/><path d="M3.8 3.8L5 5" stroke="#8090a0" stroke-width="0.8"/><circle cx="29" cy="2.5" r="1.8" fill="none" stroke="#8090a0" stroke-width="0.7"/><path d="M30.3 3.8L31.5 5" stroke="#8090a0" stroke-width="0.8"/><path d="M34 1L36 3L34 5Z" fill="#2050d0"/><rect x="38.5" y="0" width="2.5" height="6" fill="#6090e0"/><path d="M43 3H47M43 3L44.5 1.5M43 3L44.5 4.5M47 3L45.5 1.5M47 3L45.5 4.5" stroke="#40a040" stroke-width="0.9"/><path d="M48.5 2.5L49.5 3.5L50.5 2.5" stroke="#404040" stroke-width="0.5" fill="none"/></svg>
<div class="t" style="left:108.5px;top:373px;font-size:4.8px;color:#404040">100%</div>
<div class="t" style="left:123.5px;top:372.5px;font-size:4.8px;color:#404040">-</div>
<div style="left:167.5px;top:372px;width:2px;height:4px;background:#e0e0e0;border:0.5px solid #909090"></div>
<div style="left:170px;top:374px;width:420px;height:0.6px;background:#c8c8c8"></div>
<div style="left:19px;top:382.5px;width:576px;height:1px;background:#dcdcdc"></div>
<div style="left:19px;top:383.5px;width:576px;height:9.5px;background:#f3eff0"></div>
<div style="left:19px;top:393px;width:544px;height:60px;background:#000"></div>
<div class="t" style="left:19px;top:428px;width:576px;text-align:center;font-size:9px;font-weight:bold;color:#f0f0f0;line-height:10.2px">what I'm going to do today is<br>I'm gonna show you</div>
<div style="left:563px;top:273px;width:31.5px;height:180px;overflow:hidden;background:linear-gradient(#8cb0ec 0%,#6a9ae8 20%,#5a90e6 50%,#5088e0 71%,#3a7020 72.5%,#4a8428 85%,#5a9830 100%)">
<div style="left:-5px;top:-8px;width:42px;height:36px;background:radial-gradient(ellipse 55% 45% at 55% 40%,rgba(240,248,255,.85),rgba(230,240,255,.45) 50%,rgba(255,255,255,0) 85%)"></div>
<div style="left:-3px;top:41px;width:40px;height:16px;background:radial-gradient(ellipse 60% 30% at 60% 50%,rgba(255,255,255,.8),rgba(255,255,255,.3) 55%,rgba(255,255,255,0) 90%)"></div>
<div style="left:-1px;top:77px;width:38px;height:50px;background:radial-gradient(ellipse 55% 38% at 65% 50%,rgba(255,255,255,.95),rgba(240,245,255,.6) 45%,rgba(255,255,255,0) 80%)"></div>
</div>
<div style="left:-2px;top:49px;width:21px;height:22px;background:#fff;border:1px solid #7a96c0;border-radius:3px"></div>
<div class="t" style="left:1px;top:57px;font-size:7px;color:#1a2a60">10.1</div>
<div style="left:1px;top:66px;width:15px;height:1px;background:#1a2a60"></div>
<div style="left:12px;top:53px;width:1px;height:15px;background:#1a2a60"></div>
<svg style="left:1px;top:74px" width="14" height="15" viewBox="0 0 14 15"><path d="M7 0L10 3.5H8.2V6.3H11V4.5L14 7.5L11 10.5V8.7H8.2V11.5H10L7 15L4 11.5H5.8V8.7H3V10.5L0 7.5L3 4.5V6.3H5.8V3.5H4Z" fill="#5c9cf0" stroke="#3a70c0" stroke-width="0.4"/></svg>
<svg style="left:3px;top:95px" width="12" height="16" viewBox="0 0 12 16"><path d="M4 2.5A5.5 5.5 0 1 1 3 14" fill="none" stroke="#5c9cf0" stroke-width="1.4"/><path d="M5.5 0L3 2.8L6 4.5" fill="none" stroke="#5c9cf0" stroke-width="1.2"/><circle cx="5.5" cy="9" r="1.5" fill="#e00"/></svg>
<svg style="left:1px;top:118px" width="14" height="16" viewBox="0 0 14 16"><path d="M1 9Q7 3 13 9" fill="none" stroke="#5c9cf0" stroke-width="1.3"/><path d="M7 2Q12 8 7 15" fill="none" stroke="#5c9cf0" stroke-width="1.3"/><circle cx="7" cy="9.5" r="1.6" fill="#e00"/><path d="M0.5 10.5L1.2 8L3.5 9.5" fill="none" stroke="#5c9cf0" stroke-width="1"/></svg>
<svg style="left:0px;top:140px" width="14" height="15" viewBox="0 0 14 15"><rect x="0.5" y="0.5" width="13" height="13" fill="none" stroke="#c8c4b0" stroke-width="0.8" stroke-dasharray="1 1.5"/><rect x="3.5" y="3.5" width="7" height="7" fill="#f00"/></svg>
<svg style="left:0px;top:162px" width="14" height="15" viewBox="0 0 14 15"><rect x="2" y="2" width="10" height="10.5" fill="#a8c8f8" stroke="#a07050" stroke-width="0.8"/><circle cx="2" cy="2" r="1.8" fill="#f07070"/><circle cx="12" cy="2" r="1.8" fill="#f07070"/><circle cx="2" cy="12.5" r="1.8" fill="#f07070"/><circle cx="12" cy="12.5" r="1.8" fill="#f07070"/><path d="M9 5Q10 7 9 9" stroke="#333" stroke-width="0.8" fill="none"/></svg>
<svg style="left:0px;top:184px" width="14" height="16" viewBox="0 0 14 16"><path d="M1.5 14V8A5.5 5.5 0 0 1 12.5 8V14Z" fill="#a8c8f8" stroke="#a07050" stroke-width="0.8"/><circle cx="7" cy="12" r="1.5" fill="#222"/><rect x="0" y="12.5" width="2.5" height="2.5" fill="#fff" stroke="#e00" stroke-width="0.8"/><rect x="11.5" y="12.5" width="2.5" height="2.5" fill="#fff" stroke="#e00" stroke-width="0.8"/><rect x="5.5" y="0.8" width="2.5" height="2.5" fill="#fff" stroke="#e00" stroke-width="0.8"/><path d="M0 3H2M11 2H13" stroke="#e00" stroke-width="0.8"/></svg>
<div style="left:0px;top:206px;width:18px;height:1px;background:#c8c4b0"></div>
<div class="t" style="left:2px;top:213px;font-size:16px;color:#f8d020;font-weight:bold;-webkit-text-stroke:0.5px #b89000">?</div>
<div style="left:0px;top:453px;width:597px;height:1px;background:#fff"></div>
<div style="left:1px;top:457px;width:1px;height:6px;background:#716f64"></div>
<div style="left:18px;top:457px;width:1px;height:6px;background:#716f64"></div>
<div style="left:28px;top:457px;width:1px;height:6px;background:#716f64"></div>
<div style="left:46px;top:457px;width:1px;height:6px;background:#716f64"></div>
<div style="left:63px;top:457px;width:1px;height:6px;background:#716f64"></div>
<div style="left:80px;top:457px;width:1px;height:6px;background:#716f64"></div>
<div style="left:97px;top:457px;width:1px;height:6px;background:#716f64"></div>
<div style="left:114px;top:457px;width:1px;height:6px;background:#716f64"></div>
<div style="left:131px;top:457px;width:1px;height:6px;background:#716f64"></div>
<div style="left:148px;top:457px;width:1px;height:6px;background:#716f64"></div>
<div style="left:165px;top:457px;width:1px;height:6px;background:#716f64"></div>
<div style="left:178px;top:457px;width:1px;height:6px;background:#716f64"></div>
<div style="left:190px;top:457px;width:1px;height:6px;background:#716f64"></div>
<div style="left:208px;top:457px;width:1px;height:6px;background:#716f64"></div>
<div style="left:225px;top:457px;width:1px;height:6px;background:#716f64"></div>
<div style="left:242px;top:457px;width:1px;height:6px;background:#716f64"></div>
<div style="left:259px;top:457px;width:1px;height:6px;background:#716f64"></div>
<div style="left:276px;top:457px;width:1px;height:6px;background:#716f64"></div>
<div style="left:293px;top:457px;width:1px;height:6px;background:#716f64"></div>
<div style="left:310px;top:457px;width:1px;height:6px;background:#716f64"></div>
<div style="left:327px;top:457px;width:1px;height:6px;background:#716f64"></div>
<div style="left:345px;top:457px;width:1px;height:6px;background:#716f64"></div>
<div style="left:362px;top:457px;width:1px;height:6px;background:#716f64"></div>
<div style="left:379px;top:457px;width:1px;height:6px;background:#716f64"></div>
<div style="left:396px;top:457px;width:1px;height:6px;background:#716f64"></div>
<div style="left:413px;top:457px;width:1px;height:6px;background:#716f64"></div>
<div style="left:430px;top:457px;width:1px;height:6px;background:#716f64"></div>
<div style="left:447px;top:457px;width:1px;height:6px;background:#716f64"></div>
<div style="left:464px;top:457px;width:1px;height:6px;background:#716f64"></div>
<div style="left:482px;top:457px;width:1px;height:6px;background:#716f64"></div>
<div style="left:499px;top:457px;width:1px;height:6px;background:#716f64"></div>
<div style="left:516px;top:457px;width:1px;height:6px;background:#716f64"></div>
<div style="left:533px;top:457px;width:1px;height:6px;background:#716f64"></div>
<div style="left:550px;top:457px;width:1px;height:6px;background:#716f64"></div>
<div style="left:567px;top:457px;width:1px;height:6px;background:#716f64"></div>
<div style="left:584px;top:457px;width:1px;height:6px;background:#716f64"></div>
<div style="left:1px;top:463px;width:589px;height:1px;background:#716f64"></div>
<div style="left:1px;top:457px;width:1px;height:15px;background:#716f64"></div>
<div style="left:0px;top:472px;width:590px;height:1px;background:#f4f2ea"></div>
<svg style="left:41px;top:458px" width="11" height="21" viewBox="0 0 11 21"><path d="M1 8L5.5 3L10 8V19Q10 20 9 20H2Q1 20 1 19Z" fill="#fff" stroke="#000" stroke-width="1.2"/><rect x="1.6" y="14" width="7.8" height="5.4" fill="#3a706a"/></svg>
<svg style="left:4px;top:486px" width="7" height="10" viewBox="0 0 7 10"><path d="M1 0.5L6 5L1 9.5Z" fill="#111"/></svg>
<div class="t" style="left:22.5px;top:484.5px;font-size:12.5px;color:#f04040;font-weight:bold;letter-spacing:-1px">[<span style="display:inline-block;width:8px"></span>]</div>
<svg style="left:29px;top:487px" width="5" height="9" viewBox="0 0 5 9"><path d="M0.5 0.5L4.5 4.5L0.5 8.5Z" fill="#111"/></svg>
<div style="left:49px;top:486.5px;width:2.5px;height:8.5px;background:#111"></div>
<div style="left:54px;top:486.5px;width:2.5px;height:8.5px;background:#111"></div>
<div style="left:65.5px;top:480.5px;width:22.5px;height:21px;background:#fdfdfb;border:1px solid #7a9ac8;border-radius:3px"></div>
<svg style="left:70px;top:484px" width="14" height="16" viewBox="0 0 14 16"><rect x="1" y="0.5" width="12" height="8" rx="1" fill="#8eb0dc" stroke="#4a6a9a" stroke-width="0.6"/><path d="M3 4.5H9M7 2.5L9.5 4.5L7 6.5" stroke="#10c8f0" stroke-width="1.4" fill="none"/><text x="7" y="14" text-anchor="middle" font-family="Liberation Sans" font-weight="bold" font-size="5.2" fill="#2020d0">AUTO</text></svg>
<div style="left:93px;top:481px;width:208px;height:20px;background:#ccffe5;border:1px solid #7f9db9"></div>
<div class="t" style="left:98px;top:486px;font-size:11.2px;color:#000">0:00:26.295 - 653</div>
<div style="left:306px;top:481px;width:209px;height:20px;background:#ece9d8;border:1px solid #7f9db9"></div>
<div class="t" style="left:311px;top:486px;font-size:11px;color:#000">+24275ms; +23335ms</div>
<div style="left:520px;top:481px;width:69px;height:20px;background:#fff;border:1px solid #7f9db9"></div>
<div class="t" style="left:525px;top:486px;font-size:11px;color:#000">50%</div>
<div style="left:572px;top:482px;width:16px;height:18px;background:linear-gradient(135deg,#dce8fc,#b2c8f4);border:1px solid #c4d4f4;border-radius:2px"></div>
<svg style="left:575px;top:487px" width="10" height="7" viewBox="0 0 10 7"><path d="M1.5 1.5L5 5L8.5 1.5" stroke="#4d6185" stroke-width="2" fill="none"/></svg>
<div style="left:601px;top:50px;width:414px;height:196px;border-left:1px solid #fff;border-top:1px solid #fff;border-right:1px solid #716f64;border-bottom:1px solid #716f64"></div>
<div style="left:597px;top:48px;width:1px;height:650px;background:transparent"></div>
<div style="left:606px;top:55px;width:331px;height:162px;background:#000"></div>
<div style="left:606px;top:55px;width:331px;height:18px;background:#0b0814"></div>
<div style="left:607px;top:72px;width:329px;height:1px;background:#6a9ee8"></div>
<div style="left:607px;top:66px;width:1px;height:6px;background:#6a9ee8"></div>
<div style="left:612px;top:69px;width:1px;height:3px;background:#6a9ee8"></div>
<div style="left:617px;top:69px;width:1px;height:3px;background:#6a9ee8"></div>
<div style="left:622px;top:69px;width:1px;height:3px;background:#6a9ee8"></div>
<div style="left:627px;top:69px;width:1px;height:3px;background:#6a9ee8"></div>
<div style="left:632px;top:69px;width:1px;height:3px;background:#6a9ee8"></div>
<div style="left:637px;top:69px;width:1px;height:3px;background:#6a9ee8"></div>
<div style="left:642px;top:69px;width:1px;height:3px;background:#6a9ee8"></div>
<div style="left:647px;top:69px;width:1px;height:3px;background:#6a9ee8"></div>
<div style="left:652px;top:69px;width:1px;height:3px;background:#6a9ee8"></div>
<div style="left:657px;top:66px;width:1px;height:6px;background:#6a9ee8"></div>
<div style="left:662px;top:69px;width:1px;height:3px;background:#6a9ee8"></div>
<div style="left:667px;top:69px;width:1px;height:3px;background:#6a9ee8"></div>
<div style="left:672px;top:69px;width:1px;height:3px;background:#6a9ee8"></div>
<div style="left:677px;top:69px;width:1px;height:3px;background:#6a9ee8"></div>
<div style="left:682px;top:69px;width:1px;height:3px;background:#6a9ee8"></div>
<div style="left:687px;top:69px;width:1px;height:3px;background:#6a9ee8"></div>
<div style="left:692px;top:69px;width:1px;height:3px;background:#6a9ee8"></div>
<div style="left:697px;top:69px;width:1px;height:3px;background:#6a9ee8"></div>
<div style="left:702px;top:69px;width:1px;height:3px;background:#6a9ee8"></div>
<div style="left:707px;top:66px;width:1px;height:6px;background:#6a9ee8"></div>
<div style="left:712px;top:69px;width:1px;height:3px;background:#6a9ee8"></div>
<div style="left:717px;top:69px;width:1px;height:3px;background:#6a9ee8"></div>
<div style="left:722px;top:69px;width:1px;height:3px;background:#6a9ee8"></div>
<div style="left:727px;top:69px;width:1px;height:3px;background:#6a9ee8"></div>
<div style="left:732px;top:69px;width:1px;height:3px;background:#6a9ee8"></div>
<div style="left:737px;top:69px;width:1px;height:3px;background:#6a9ee8"></div>
<div style="left:742px;top:69px;width:1px;height:3px;background:#6a9ee8"></div>
<div style="left:747px;top:69px;width:1px;height:3px;background:#6a9ee8"></div>
<div style="left:752px;top:69px;width:1px;height:3px;background:#6a9ee8"></div>
<div style="left:757px;top:66px;width:1px;height:6px;background:#6a9ee8"></div>
<div style="left:762px;top:69px;width:1px;height:3px;background:#6a9ee8"></div>
<div style="left:767px;top:69px;width:1px;height:3px;background:#6a9ee8"></div>
<div style="left:772px;top:69px;width:1px;height:3px;background:#6a9ee8"></div>
<div style="left:777px;top:69px;width:1px;height:3px;background:#6a9ee8"></div>
<div style="left:782px;top:69px;width:1px;height:3px;background:#6a9ee8"></div>
<div style="left:787px;top:69px;width:1px;height:3px;background:#6a9ee8"></div>
<div style="left:792px;top:69px;width:1px;height:3px;background:#6a9ee8"></div>
<div style="left:797px;top:69px;width:1px;height:3px;background:#6a9ee8"></div>
<div style="left:802px;top:69px;width:1px;height:3px;background:#6a9ee8"></div>
<div style="left:807px;top:66px;width:1px;height:6px;background:#6a9ee8"></div>
<div style="left:812px;top:69px;width:1px;height:3px;background:#6a9ee8"></div>
<div style="left:817px;top:69px;width:1px;height:3px;background:#6a9ee8"></div>
<div style="left:822px;top:69px;width:1px;height:3px;background:#6a9ee8"></div>
<div style="left:827px;top:69px;width:1px;height:3px;background:#6a9ee8"></div>
<div style="left:832px;top:69px;width:1px;height:3px;background:#6a9ee8"></div>
<div style="left:837px;top:69px;width:1px;height:3px;background:#6a9ee8"></div>
<div style="left:842px;top:69px;width:1px;height:3px;background:#6a9ee8"></div>
<div style="left:847px;top:69px;width:1px;height:3px;background:#6a9ee8"></div>
<div style="left:852px;top:69px;width:1px;height:3px;background:#6a9ee8"></div>
<div style="left:857px;top:66px;width:1px;height:6px;background:#6a9ee8"></div>
<div style="left:862px;top:69px;width:1px;height:3px;background:#6a9ee8"></div>
<div style="left:867px;top:69px;width:1px;height:3px;background:#6a9ee8"></div>
<div style="left:872px;top:69px;width:1px;height:3px;background:#6a9ee8"></div>
<div style="left:877px;top:69px;width:1px;height:3px;background:#6a9ee8"></div>
<div style="left:882px;top:69px;width:1px;height:3px;background:#6a9ee8"></div>
<div style="left:887px;top:69px;width:1px;height:3px;background:#6a9ee8"></div>
<div style="left:892px;top:69px;width:1px;height:3px;background:#6a9ee8"></div>
<div style="left:897px;top:69px;width:1px;height:3px;background:#6a9ee8"></div>
<div style="left:902px;top:69px;width:1px;height:3px;background:#6a9ee8"></div>
<div style="left:907px;top:66px;width:1px;height:6px;background:#6a9ee8"></div>
<div style="left:912px;top:69px;width:1px;height:3px;background:#6a9ee8"></div>
<div style="left:917px;top:69px;width:1px;height:3px;background:#6a9ee8"></div>
<div style="left:922px;top:69px;width:1px;height:3px;background:#6a9ee8"></div>
<div style="left:927px;top:69px;width:1px;height:3px;background:#6a9ee8"></div>
<div style="left:932px;top:69px;width:1px;height:3px;background:#6a9ee8"></div>
<div class="t" style="left:607.5px;top:58.8px;font-size:10.2px;color:#6a9ee8;letter-spacing:0.45px">0:00:00</div>
<div class="t" style="left:657.5px;top:58.8px;font-size:10.2px;color:#6a9ee8;letter-spacing:0.45px">01</div>
<div class="t" style="left:707.5px;top:58.8px;font-size:10.2px;color:#6a9ee8;letter-spacing:0.45px">02</div>
<div class="t" style="left:757.5px;top:58.8px;font-size:10.2px;color:#6a9ee8;letter-spacing:0.45px">03</div>
<div class="t" style="left:807.5px;top:58.8px;font-size:10.2px;color:#6a9ee8;letter-spacing:0.45px">04</div>
<div class="t" style="left:857.5px;top:58.8px;font-size:10.2px;color:#6a9ee8;letter-spacing:0.45px">05</div>
<div class="t" style="left:907.5px;top:58.8px;font-size:10.2px;color:#6a9ee8;letter-spacing:0.45px">06</div>
<svg style="left:606px;top:73px" width="331" height="128" viewBox="0 0 331 128"><rect x="103" y="0" width="47" height="128" fill="#3f2462"/><rect x="8" y="112" width="96" height="16" fill="#060614"/><rect x="8" y="121" width="96" height="6" fill="#0a0a26"/><rect x="150" y="116" width="181" height="12" fill="#060614"/><rect x="205.8" y="52.9" width="1.2" height="75.1" fill="#1a2080" opacity="0.11"/><rect x="218.3" y="101.0" width="1.2" height="27.0" fill="#1a2080" opacity="0.12"/><rect x="245.7" y="106.9" width="1.4" height="21.1" fill="#1a2080" opacity="0.09"/><rect x="124.4" y="67.9" width="1.4" height="60.1" fill="#1a2080" opacity="0.06"/><rect x="325.0" y="70.5" width="1.6" height="57.5" fill="#1a2080" opacity="0.13"/><rect x="139.4" y="78.7" width="0.6" height="49.3" fill="#1a2080" opacity="0.06"/><rect x="146.8" y="111.0" width="0.8" height="17.0" fill="#1a2080" opacity="0.11"/><rect x="203.1" y="79.3" width="1.4" height="48.7" fill="#1a2080" opacity="0.13"/><rect x="216.4" y="83.3" width="1.3" height="44.7" fill="#1a2080" opacity="0.09"/><rect x="328.5" y="58.4" width="1.6" height="69.6" fill="#1a2080" opacity="0.14"/><rect x="174.9" y="94.2" width="0.8" height="33.8" fill="#1a2080" opacity="0.06"/><rect x="276.4" y="58.0" width="1.0" height="70.0" fill="#1a2080" opacity="0.10"/><rect x="319.6" y="113.0" width="1.4" height="15.0" fill="#1a2080" opacity="0.08"/><rect x="308.8" y="49.3" width="1.1" height="78.7" fill="#1a2080" opacity="0.10"/><rect x="120.4" y="62.4" width="1.2" height="65.6" fill="#1a2080" opacity="0.09"/><rect x="123.6" y="50.3" width="0.9" height="77.7" fill="#1a2080" opacity="0.15"/><rect x="130.5" y="106.4" width="0.8" height="21.6" fill="#1a2080" opacity="0.06"/><rect x="283.3" y="76.6" width="0.8" height="51.4" fill="#1a2080" opacity="0.11"/><rect x="146.9" y="104.5" width="1.3" height="23.5" fill="#1a2080" opacity="0.13"/><rect x="130.2" y="99.2" width="1.0" height="28.8" fill="#1a2080" opacity="0.09"/><rect x="322.5" y="93.2" width="1.4" height="34.8" fill="#1a2080" opacity="0.17"/><rect x="151.4" y="57.5" width="1.0" height="70.5" fill="#1a2080" opacity="0.13"/><rect x="126.6" y="99.1" width="1.6" height="28.9" fill="#1a2080" opacity="0.08"/><rect x="277.9" y="93.7" width="0.9" height="34.3" fill="#1a2080" opacity="0.06"/><rect x="124.3" y="97.2" width="1.2" height="30.8" fill="#1a2080" opacity="0.13"/><rect x="187.6" y="50.7" width="1.1" height="77.3" fill="#1a2080" opacity="0.11"/><rect x="233.3" y="101.1" width="1.5" height="26.9" fill="#1a2080" opacity="0.07"/><rect x="308.4" y="96.8" width="1.4" height="31.2" fill="#1a2080" opacity="0.07"/><rect x="270.4" y="100.2" width="1.5" height="27.8" fill="#1a2080" opacity="0.17"/><rect x="302.5" y="85.6" width="1.2" height="42.4" fill="#1a2080" opacity="0.06"/><rect x="112.7" y="97.5" width="1.6" height="30.5" fill="#1a2080" opacity="0.14"/><rect x="161.8" y="74.2" width="1.4" height="53.8" fill="#1a2080" opacity="0.09"/><rect x="143.5" y="108.5" width="1.3" height="19.5" fill="#1a2080" opacity="0.08"/><rect x="229.9" y="73.1" width="1.5" height="54.9" fill="#1a2080" opacity="0.09"/><rect x="310.4" y="111.9" width="0.8" height="16.1" fill="#1a2080" opacity="0.08"/><rect x="204.3" y="101.5" width="0.7" height="26.5" fill="#1a2080" opacity="0.10"/><rect x="232.7" y="89.5" width="0.7" height="38.5" fill="#1a2080" opacity="0.17"/><rect x="324.6" y="68.1" width="1.3" height="59.9" fill="#1a2080" opacity="0.13"/><rect x="135.6" y="111.8" width="0.6" height="16.2" fill="#1a2080" opacity="0.17"/><rect x="261.7" y="111.6" width="1.6" height="16.4" fill="#1a2080" opacity="0.13"/><rect x="212.5" y="92.3" width="1.3" height="35.7" fill="#1a2080" opacity="0.18"/><rect x="120.9" y="65.1" width="1.1" height="62.9" fill="#1a2080" opacity="0.17"/><rect x="269.8" y="61.4" width="1.3" height="66.6" fill="#1a2080" opacity="0.17"/><rect x="183.2" y="54.4" width="1.3" height="73.6" fill="#1a2080" opacity="0.16"/><rect x="197.9" y="56.9" width="1.4" height="71.1" fill="#1a2080" opacity="0.12"/><rect x="244.6" y="75.1" width="1.0" height="52.9" fill="#1a2080" opacity="0.13"/><rect x="122.0" y="48.4" width="1.2" height="79.6" fill="#1a2080" opacity="0.16"/><rect x="267.8" y="65.2" width="1.0" height="62.8" fill="#1a2080" opacity="0.13"/><rect x="203.1" y="107.6" width="1.4" height="20.4" fill="#1a2080" opacity="0.15"/><rect x="110.7" y="81.7" width="1.2" height="46.3" fill="#1a2080" opacity="0.08"/><rect x="261.1" y="73.1" width="1.1" height="54.9" fill="#1a2080" opacity="0.17"/><rect x="161.6" y="93.4" width="0.6" height="34.6" fill="#1a2080" opacity="0.14"/><rect x="149.6" y="54.1" width="0.8" height="73.9" fill="#1a2080" opacity="0.14"/><rect x="203.4" y="91.7" width="1.5" height="36.3" fill="#1a2080" opacity="0.14"/><rect x="148.7" y="60.6" width="1.0" height="67.4" fill="#1a2080" opacity="0.17"/><rect x="302.1" y="75.1" width="1.0" height="52.9" fill="#1a2080" opacity="0.09"/><rect x="134.6" y="58.6" width="1.1" height="69.4" fill="#1a2080" opacity="0.16"/><rect x="264.0" y="95.0" width="1.6" height="33.0" fill="#1a2080" opacity="0.07"/><rect x="205.4" y="99.1" width="0.9" height="28.9" fill="#1a2080" opacity="0.10"/><rect x="244.8" y="92.5" width="1.1" height="35.5" fill="#1a2080" opacity="0.16"/><rect x="325.0" y="108.1" width="1.1" height="19.9" fill="#1a2080" opacity="0.05"/><rect x="300.4" y="66.9" width="0.6" height="61.1" fill="#1a2080" opacity="0.12"/><rect x="173.5" y="111.8" width="1.4" height="16.2" fill="#1a2080" opacity="0.07"/><rect x="206.3" y="59.1" width="0.6" height="68.9" fill="#1a2080" opacity="0.08"/><rect x="135.7" y="72.1" width="0.6" height="55.9" fill="#1a2080" opacity="0.11"/><rect x="245.7" y="60.5" width="1.3" height="67.5" fill="#1a2080" opacity="0.17"/><rect x="258.0" y="82.1" width="0.8" height="45.9" fill="#1a2080" opacity="0.07"/><rect x="106.4" y="66.6" width="1.1" height="61.4" fill="#1a2080" opacity="0.07"/><rect x="165.3" y="67.7" width="0.9" height="60.3" fill="#1a2080" opacity="0.12"/><rect x="242.3" y="87.4" width="1.4" height="40.6" fill="#1a2080" opacity="0.15"/><rect x="307.9" y="52.4" width="0.7" height="75.6" fill="#1a2080" opacity="0.14"/><rect x="133.2" y="72.3" width="1.1" height="55.7" fill="#1a2080" opacity="0.17"/><rect x="188.8" y="55.8" width="1.2" height="72.2" fill="#1a2080" opacity="0.15"/><rect x="316.5" y="70.7" width="1.1" height="57.3" fill="#1a2080" opacity="0.08"/><rect x="266.4" y="71.3" width="1.4" height="56.7" fill="#1a2080" opacity="0.14"/><rect x="152.0" y="49.3" width="1.5" height="78.7" fill="#1a2080" opacity="0.18"/><rect x="224.8" y="92.2" width="1.4" height="35.8" fill="#1a2080" opacity="0.17"/><rect x="296.6" y="107.6" width="0.9" height="20.4" fill="#1a2080" opacity="0.11"/><rect x="227.8" y="81.3" width="1.4" height="46.7" fill="#1a2080" opacity="0.05"/><rect x="286.1" y="61.0" width="0.7" height="67.0" fill="#1a2080" opacity="0.07"/><rect x="179.4" y="103.9" width="1.4" height="24.1" fill="#1a2080" opacity="0.07"/><rect x="220.2" y="58.4" width="1.3" height="69.6" fill="#1a2080" opacity="0.14"/><rect x="316.8" y="51.3" width="1.1" height="76.7" fill="#1a2080" opacity="0.06"/><rect x="153.8" y="94.1" width="1.1" height="33.9" fill="#1a2080" opacity="0.14"/><rect x="247.7" y="58.2" width="1.1" height="69.8" fill="#1a2080" opacity="0.12"/><rect x="174.1" y="58.1" width="1.0" height="69.9" fill="#1a2080" opacity="0.17"/><rect x="150.9" y="50.1" width="1.5" height="77.9" fill="#1a2080" opacity="0.12"/><rect x="232.9" y="78.2" width="0.8" height="49.8" fill="#1a2080" opacity="0.12"/><rect x="240.2" y="50.0" width="0.6" height="78.0" fill="#1a2080" opacity="0.12"/><rect x="194.1" y="76.4" width="1.4" height="51.6" fill="#1a2080" opacity="0.11"/><rect x="137.0" y="122.3" width="2.8" height="1.3" fill="#30d0a0" opacity="0.71"/><rect x="127.9" y="122.6" width="2.6" height="1.7" fill="#30d0a0" opacity="0.81"/><rect x="112.6" y="124.0" width="1.6" height="1.2" fill="#40f0d0" opacity="0.61"/><rect x="114.5" y="122.1" width="2.2" height="1.6" fill="#c0fff0" opacity="0.85"/><rect x="112.4" y="125.5" width="1.8" height="1.4" fill="#e8ffff" opacity="0.89"/><rect x="137.5" y="126.2" width="1.6" height="1.5" fill="#60e8ff" opacity="0.85"/><rect x="130.6" y="126.1" width="2.8" height="1.2" fill="#c0fff0" opacity="0.94"/><rect x="133.7" y="126.1" width="2.1" height="1.6" fill="#e8ffff" opacity="0.96"/><rect x="121.3" y="123.5" width="3.8" height="1.2" fill="#c0fff0" opacity="0.96"/><rect x="113.6" y="123.1" width="3.3" height="1.2" fill="#40f0d0" opacity="0.77"/><rect x="147.5" y="124.6" width="3.3" height="1.2" fill="#40f0d0" opacity="0.64"/><rect x="131.9" y="123.7" width="3.6" height="1.3" fill="#60e8ff" opacity="0.85"/><rect x="122.4" y="126.8" width="3.6" height="1.6" fill="#30d0a0" opacity="0.64"/><rect x="109.6" y="124.6" width="2.8" height="1.5" fill="#c0fff0" opacity="0.68"/><rect x="112.8" y="122.8" width="1.9" height="1.2" fill="#40f0d0" opacity="0.83"/><rect x="113.6" y="125.3" width="1.7" height="1.1" fill="#30d0a0" opacity="0.79"/><rect x="129.6" y="124.1" width="3.0" height="1.0" fill="#40f0d0" opacity="0.94"/><rect x="115.6" y="124.2" width="3.3" height="1.3" fill="#c0fff0" opacity="0.84"/><rect x="112.0" y="125.8" width="2.3" height="1.1" fill="#30d0a0" opacity="0.83"/><rect x="116.0" y="124.8" width="2.4" height="1.6" fill="#e8ffff" opacity="0.96"/><rect x="139.3" y="125.7" width="3.5" height="1.3" fill="#e8ffff" opacity="0.95"/><rect x="137.2" y="125.7" width="3.4" height="1.3" fill="#c0fff0" opacity="0.63"/><rect x="122.4" y="124.3" width="1.5" height="1.3" fill="#60e8ff" opacity="0.62"/><rect x="119.5" y="126.6" width="2.2" height="1.2" fill="#30d0a0" opacity="0.83"/><rect x="130.4" y="123.9" width="4.0" height="1.5" fill="#40f0d0" opacity="0.90"/><rect x="149.2" y="122.1" width="3.0" height="1.6" fill="#e8ffff" opacity="0.78"/><rect x="129.2" y="125.7" width="3.1" height="1.0" fill="#e8ffff" opacity="0.70"/><rect x="146.0" y="124.6" width="2.8" height="1.8" fill="#60e8ff" opacity="0.94"/><rect x="112.2" y="124.1" width="3.1" height="1.4" fill="#40f0d0" opacity="0.75"/><rect x="147.4" y="123.9" width="3.9" height="1.7" fill="#60e8ff" opacity="0.84"/><rect x="110.5" y="126.5" width="2.6" height="1.4" fill="#60e8ff" opacity="0.72"/><rect x="130.3" y="124.3" width="2.2" height="1.7" fill="#e8ffff" opacity="0.61"/><rect x="140.4" y="124.8" width="3.1" height="1.3" fill="#30d0a0" opacity="0.62"/><rect x="121.2" y="123.9" width="3.0" height="1.6" fill="#e8ffff" opacity="0.63"/><rect x="146.0" y="124.1" width="2.7" height="1.8" fill="#c0fff0" opacity="0.62"/><rect x="112.1" y="125.9" width="3.8" height="1.1" fill="#c0fff0" opacity="0.84"/><rect x="112.8" y="125.0" width="2.6" height="1.2" fill="#40f0d0" opacity="0.74"/><rect x="114.5" y="123.7" width="1.8" height="1.3" fill="#60e8ff" opacity="0.70"/><rect x="132.5" y="124.0" width="3.4" height="1.4" fill="#c0fff0" opacity="0.98"/><rect x="138.8" y="123.1" width="1.8" height="1.7" fill="#60e8ff" opacity="0.85"/><rect x="123.1" y="123.3" width="3.2" height="1.5" fill="#60e8ff" opacity="0.68"/><rect x="119.7" y="123.1" width="3.9" height="1.4" fill="#c0fff0" opacity="0.95"/><rect x="109.7" y="122.3" width="2.2" height="1.3" fill="#60e8ff" opacity="0.62"/><rect x="117.3" y="123.3" width="3.4" height="1.7" fill="#c0fff0" opacity="0.82"/><rect x="134.5" y="123.8" width="2.7" height="1.2" fill="#e8ffff" opacity="0.80"/><rect x="113.6" y="126.2" width="3.5" height="1.4" fill="#60e8ff" opacity="0.94"/><rect x="140.3" y="124.1" width="3.4" height="1.3" fill="#c0fff0" opacity="0.75"/><rect x="135.5" y="126.7" width="2.3" height="1.4" fill="#c0fff0" opacity="0.77"/><rect x="123.5" y="122.5" width="3.7" height="1.1" fill="#40f0d0" opacity="0.77"/><rect x="131.9" y="125.9" width="2.7" height="1.7" fill="#40f0d0" opacity="0.63"/><rect x="117.0" y="125.2" width="1.7" height="1.2" fill="#e8ffff" opacity="0.71"/><rect x="114.0" y="123.7" width="3.3" height="1.3" fill="#40f0d0" opacity="0.73"/><rect x="126.5" y="124.9" width="3.8" height="1.5" fill="#e8ffff" opacity="0.78"/><rect x="141.7" y="123.5" width="2.3" height="1.3" fill="#60e8ff" opacity="0.70"/><rect x="156.7" y="123.8" width="2.4" height="1.3" fill="#30d0a0" opacity="0.92"/><rect x="161.6" y="123.8" width="2.5" height="1.1" fill="#60e8ff" opacity="0.83"/><rect x="154.3" y="125.6" width="3.7" height="1.2" fill="#40f0d0" opacity="0.69"/><rect x="152.8" y="122.8" width="2.2" height="1.0" fill="#30d0a0" opacity="0.63"/><rect x="159.1" y="125.8" width="1.7" height="1.1" fill="#40f0d0" opacity="0.96"/><rect x="153.1" y="125.0" width="1.9" height="1.6" fill="#30d0a0" opacity="0.70"/><rect x="154.9" y="125.7" width="2.8" height="1.6" fill="#30d0a0" opacity="0.74"/><rect x="162.5" y="123.6" width="1.8" height="1.4" fill="#40f0d0" opacity="0.88"/><rect x="163.9" y="124.0" width="3.6" height="1.5" fill="#40f0d0" opacity="0.92"/><rect x="162.8" y="126.3" width="3.9" height="1.5" fill="#60e8ff" opacity="0.74"/><rect x="152.1" y="122.5" width="3.8" height="1.7" fill="#c0fff0" opacity="0.90"/><rect x="164.9" y="123.8" width="1.9" height="1.2" fill="#30d0a0" opacity="0.81"/><rect x="155.6" y="126.3" width="2.7" height="1.6" fill="#e8ffff" opacity="0.86"/><rect x="162.1" y="122.9" width="1.7" height="1.4" fill="#60e8ff" opacity="0.79"/><rect x="162.4" y="123.5" width="2.0" height="1.3" fill="#60e8ff" opacity="0.69"/><rect x="161.3" y="124.9" width="2.1" height="1.1" fill="#e8ffff" opacity="0.76"/><rect x="213.4" y="126.5" width="3.1" height="1.8" fill="#60e8ff" opacity="0.79"/><rect x="201.7" y="126.3" width="3.8" height="1.3" fill="#60e8ff" opacity="0.91"/><rect x="198.7" y="126.1" width="2.5" height="1.2" fill="#c0fff0" opacity="0.92"/><rect x="203.9" y="124.5" width="2.8" height="1.2" fill="#40f0d0" opacity="0.86"/><rect x="201.3" y="122.1" width="2.7" height="1.3" fill="#c0fff0" opacity="0.89"/><rect x="207.9" y="122.8" width="1.9" height="1.3" fill="#e8ffff" opacity="0.96"/><rect x="211.6" y="122.6" width="3.4" height="1.5" fill="#60e8ff" opacity="0.81"/><rect x="199.7" y="125.7" width="1.5" height="1.7" fill="#c0fff0" opacity="0.93"/><rect x="198.5" y="123.3" width="3.3" height="1.1" fill="#30d0a0" opacity="0.88"/><rect x="198.5" y="125.6" width="2.9" height="1.4" fill="#40f0d0" opacity="0.92"/><rect x="204.5" y="126.4" width="1.7" height="1.7" fill="#c0fff0" opacity="0.61"/><rect x="204.4" y="124.4" width="3.9" height="1.8" fill="#e8ffff" opacity="0.72"/><rect x="198.4" y="123.5" width="2.7" height="1.6" fill="#e8ffff" opacity="0.63"/><rect x="199.5" y="125.2" width="3.2" height="1.6" fill="#40f0d0" opacity="0.86"/><rect x="197.2" y="123.8" width="3.3" height="1.2" fill="#60e8ff" opacity="0.65"/><rect x="210.9" y="126.1" width="3.6" height="1.6" fill="#60e8ff" opacity="0.66"/><rect x="208.3" y="126.5" width="3.4" height="1.8" fill="#30d0a0" opacity="0.82"/><rect x="198.6" y="122.9" width="2.4" height="1.1" fill="#e8ffff" opacity="0.98"/><rect x="207.1" y="125.5" width="2.3" height="1.7" fill="#40f0d0" opacity="0.64"/><rect x="208.2" y="122.6" width="3.1" height="1.1" fill="#c0fff0" opacity="0.76"/><rect x="212.1" y="124.8" width="1.7" height="1.2" fill="#c0fff0" opacity="0.99"/><rect x="204.8" y="125.7" width="2.4" height="1.7" fill="#60e8ff" opacity="0.66"/><rect x="200.7" y="122.7" width="3.2" height="1.4" fill="#30d0a0" opacity="0.85"/><rect x="237.6" y="124.9" width="2.3" height="1.6" fill="#c0fff0" opacity="0.86"/><rect x="234.4" y="122.1" width="2.3" height="1.3" fill="#30d0a0" opacity="0.64"/><rect x="228.2" y="124.4" width="3.5" height="1.7" fill="#60e8ff" opacity="0.89"/><rect x="224.9" y="124.6" width="2.2" height="1.2" fill="#60e8ff" opacity="0.80"/><rect x="221.8" y="125.4" width="4.0" height="1.4" fill="#c0fff0" opacity="0.83"/><rect x="218.7" y="125.2" width="3.4" height="1.1" fill="#30d0a0" opacity="0.83"/><rect x="236.8" y="123.6" width="3.8" height="1.3" fill="#30d0a0" opacity="0.95"/><rect x="230.2" y="125.5" width="2.1" height="1.5" fill="#60e8ff" opacity="0.82"/><rect x="233.1" y="123.3" width="3.8" height="1.8" fill="#e8ffff" opacity="0.84"/><rect x="221.3" y="126.0" width="2.2" height="1.7" fill="#c0fff0" opacity="0.90"/><rect x="227.8" y="122.8" width="3.0" height="1.6" fill="#30d0a0" opacity="0.61"/><rect x="222.9" y="126.7" width="3.8" height="1.5" fill="#e8ffff" opacity="0.90"/><rect x="240.9" y="126.4" width="3.0" height="1.5" fill="#40f0d0" opacity="0.66"/><rect x="229.1" y="122.2" width="2.8" height="1.1" fill="#30d0a0" opacity="0.67"/><rect x="232.0" y="123.3" width="2.9" height="1.3" fill="#40f0d0" opacity="0.89"/><rect x="239.3" y="123.9" width="2.7" height="1.1" fill="#e8ffff" opacity="0.76"/><rect x="234.8" y="125.3" width="3.4" height="1.6" fill="#30d0a0" opacity="0.96"/><rect x="230.5" y="126.3" width="3.2" height="1.7" fill="#40f0d0" opacity="0.83"/><rect x="242.4" y="124.5" width="2.8" height="1.3" fill="#40f0d0" opacity="0.73"/><rect x="219.5" y="125.5" width="3.8" height="1.6" fill="#60e8ff" opacity="0.73"/><rect x="239.3" y="126.2" width="3.7" height="1.2" fill="#30d0a0" opacity="0.70"/><rect x="241.6" y="126.7" width="2.7" height="1.1" fill="#c0fff0" opacity="0.82"/><rect x="235.7" y="126.5" width="3.7" height="1.8" fill="#e8ffff" opacity="0.95"/><rect x="229.4" y="125.9" width="2.1" height="1.6" fill="#60e8ff" opacity="0.65"/><rect x="219.9" y="124.5" width="1.8" height="1.7" fill="#60e8ff" opacity="0.98"/><rect x="218.0" y="123.2" width="2.2" height="1.3" fill="#40f0d0" opacity="0.78"/><rect x="230.2" y="124.5" width="1.9" height="1.6" fill="#c0fff0" opacity="0.62"/><rect x="218.8" y="126.3" width="2.3" height="1.4" fill="#30d0a0" opacity="0.95"/><rect x="223.5" y="126.1" width="3.2" height="1.0" fill="#e8ffff" opacity="0.94"/><rect x="227.6" y="124.3" width="1.9" height="1.7" fill="#60e8ff" opacity="0.68"/><rect x="235.1" y="122.9" width="3.7" height="1.0" fill="#40f0d0" opacity="0.72"/><rect x="240.1" y="126.6" width="2.2" height="1.3" fill="#c0fff0" opacity="0.73"/><rect x="243.8" y="125.7" width="2.5" height="1.1" fill="#e8ffff" opacity="0.65"/><rect x="236.7" y="123.3" width="3.3" height="1.4" fill="#e8ffff" opacity="0.92"/><rect x="228.1" y="125.2" width="3.7" height="1.5" fill="#c0fff0" opacity="0.99"/><rect x="260.7" y="122.9" width="2.1" height="1.1" fill="#40f0d0" opacity="0.79"/><rect x="250.9" y="126.4" width="1.7" height="1.7" fill="#40f0d0" opacity="0.84"/><rect x="253.4" y="123.2" width="3.5" height="1.1" fill="#e8ffff" opacity="1.00"/><rect x="252.3" y="122.9" width="3.3" height="1.0" fill="#c0fff0" opacity="1.00"/><rect x="250.4" y="124.2" width="3.4" height="1.3" fill="#30d0a0" opacity="0.62"/><rect x="250.8" y="125.7" width="3.8" height="1.3" fill="#30d0a0" opacity="0.91"/><rect x="256.2" y="124.4" width="3.6" height="1.5" fill="#60e8ff" opacity="0.90"/><rect x="256.4" y="124.9" width="3.4" height="1.1" fill="#30d0a0" opacity="0.69"/><rect x="255.3" y="125.7" width="3.5" height="1.6" fill="#c0fff0" opacity="0.70"/><rect x="256.5" y="126.1" width="3.0" height="1.2" fill="#c0fff0" opacity="0.84"/><rect x="258.6" y="124.7" width="3.7" height="1.1" fill="#c0fff0" opacity="0.84"/><rect x="257.3" y="125.9" width="2.8" height="1.6" fill="#40f0d0" opacity="0.63"/><rect x="260.9" y="124.7" width="2.9" height="1.6" fill="#c0fff0" opacity="0.85"/><rect x="250.6" y="124.0" width="3.2" height="1.7" fill="#60e8ff" opacity="0.91"/><rect x="259.2" y="124.4" width="3.1" height="1.4" fill="#30d0a0" opacity="0.70"/><rect x="273.1" y="125.3" width="3.6" height="1.6" fill="#40f0d0" opacity="0.73"/><rect x="282.9" y="125.4" width="3.3" height="1.8" fill="#c0fff0" opacity="0.80"/><rect x="292.4" y="126.7" width="1.9" height="1.4" fill="#40f0d0" opacity="0.60"/><rect x="281.1" y="124.5" width="1.7" height="1.4" fill="#30d0a0" opacity="0.77"/><rect x="270.4" y="122.2" width="4.0" height="1.6" fill="#60e8ff" opacity="0.69"/><rect x="276.1" y="124.6" width="2.1" height="1.4" fill="#c0fff0" opacity="0.75"/><rect x="278.8" y="126.7" width="3.0" height="1.0" fill="#30d0a0" opacity="0.83"/><rect x="299.8" y="125.5" width="2.9" height="1.7" fill="#60e8ff" opacity="0.97"/><rect x="273.7" y="126.1" width="3.8" height="1.2" fill="#30d0a0" opacity="0.91"/><rect x="274.9" y="123.7" width="2.0" height="1.4" fill="#c0fff0" opacity="0.79"/><rect x="280.8" y="124.9" width="3.4" height="1.4" fill="#30d0a0" opacity="1.00"/><rect x="289.7" y="126.1" width="2.0" height="1.3" fill="#40f0d0" opacity="0.62"/><rect x="276.8" y="126.6" width="3.1" height="1.4" fill="#e8ffff" opacity="0.80"/><rect x="286.2" y="125.1" width="2.0" height="1.1" fill="#40f0d0" opacity="0.66"/><rect x="298.0" y="123.7" width="3.4" height="1.6" fill="#40f0d0" opacity="0.61"/><rect x="278.3" y="123.8" width="1.7" height="1.7" fill="#e8ffff" opacity="0.70"/><rect x="296.1" y="125.2" width="2.3" height="1.5" fill="#30d0a0" opacity="0.62"/><rect x="272.8" y="124.9" width="1.6" height="1.2" fill="#30d0a0" opacity="0.79"/><rect x="290.2" y="124.5" width="2.9" height="1.3" fill="#30d0a0" opacity="0.87"/><rect x="272.7" y="123.0" width="2.2" height="1.6" fill="#30d0a0" opacity="0.65"/><rect x="284.5" y="123.7" width="1.8" height="1.3" fill="#60e8ff" opacity="0.69"/><rect x="269.3" y="122.1" width="3.1" height="1.5" fill="#e8ffff" opacity="0.86"/><rect x="270.1" y="126.1" width="2.9" height="1.3" fill="#40f0d0" opacity="0.98"/><rect x="295.8" y="123.1" width="3.1" height="1.1" fill="#30d0a0" opacity="0.65"/><rect x="283.8" y="124.4" width="3.8" height="1.2" fill="#e8ffff" opacity="0.69"/><rect x="297.6" y="123.0" width="3.4" height="1.3" fill="#c0fff0" opacity="0.81"/><rect x="291.8" y="126.4" width="3.5" height="1.4" fill="#e8ffff" opacity="0.88"/><rect x="285.7" y="125.4" width="1.6" height="1.3" fill="#e8ffff" opacity="0.96"/><rect x="297.2" y="123.3" width="2.4" height="1.7" fill="#e8ffff" opacity="0.79"/><rect x="278.4" y="123.2" width="1.6" height="1.3" fill="#e8ffff" opacity="0.83"/><rect x="276.4" y="125.2" width="2.0" height="1.4" fill="#60e8ff" opacity="0.74"/><rect x="296.7" y="122.1" width="3.3" height="1.2" fill="#40f0d0" opacity="0.85"/><rect x="287.9" y="124.0" width="2.5" height="1.2" fill="#30d0a0" opacity="0.95"/><rect x="280.2" y="126.4" width="1.6" height="1.1" fill="#60e8ff" opacity="0.71"/><rect x="283.8" y="124.3" width="1.6" height="1.5" fill="#e8ffff" opacity="0.69"/><rect x="289.8" y="123.1" width="1.5" height="1.4" fill="#30d0a0" opacity="0.60"/><rect x="285.5" y="126.1" width="3.4" height="1.1" fill="#60e8ff" opacity="0.95"/><rect x="290.1" y="125.8" width="2.2" height="1.1" fill="#40f0d0" opacity="0.73"/><rect x="290.9" y="125.3" width="3.2" height="1.8" fill="#c0fff0" opacity="0.66"/><rect x="287.9" y="124.4" width="2.9" height="1.3" fill="#e8ffff" opacity="0.75"/><rect x="289.4" y="124.4" width="3.1" height="1.3" fill="#c0fff0" opacity="0.97"/><rect x="319.8" y="126.2" width="4.0" height="1.7" fill="#e8ffff" opacity="0.65"/><rect x="314.0" y="125.7" width="2.7" height="1.1" fill="#30d0a0" opacity="0.95"/><rect x="306.1" y="123.2" width="2.8" height="1.6" fill="#30d0a0" opacity="0.70"/><rect x="317.7" y="123.8" width="3.2" height="1.1" fill="#c0fff0" opacity="0.94"/><rect x="321.6" y="124.7" width="2.6" height="1.6" fill="#60e8ff" opacity="0.90"/><rect x="310.4" y="122.8" width="2.0" height="1.5" fill="#e8ffff" opacity="0.69"/><rect x="308.7" y="122.1" width="3.0" height="1.8" fill="#c0fff0" opacity="0.71"/><rect x="310.4" y="123.2" width="3.2" height="1.3" fill="#c0fff0" opacity="0.62"/><rect x="319.3" y="122.6" width="1.6" height="1.2" fill="#60e8ff" opacity="1.00"/><rect x="307.4" y="123.6" width="1.6" height="1.4" fill="#30d0a0" opacity="0.67"/><rect x="306.3" y="124.1" width="3.7" height="1.5" fill="#c0fff0" opacity="0.76"/><rect x="317.4" y="125.7" width="4.0" height="1.3" fill="#c0fff0" opacity="0.82"/><rect x="321.0" y="122.7" width="1.9" height="1.1" fill="#e8ffff" opacity="0.95"/><rect x="313.7" y="122.7" width="3.7" height="1.2" fill="#60e8ff" opacity="0.66"/><rect x="317.5" y="123.3" width="2.1" height="1.4" fill="#e8ffff" opacity="0.82"/><rect x="316.2" y="122.7" width="1.5" height="1.6" fill="#40f0d0" opacity="0.60"/><rect x="311.7" y="122.7" width="3.5" height="1.8" fill="#30d0a0" opacity="0.79"/><rect x="313.3" y="125.9" width="2.5" height="1.0" fill="#60e8ff" opacity="0.85"/><rect x="321.5" y="123.2" width="2.0" height="1.2" fill="#c0fff0" opacity="1.00"/><rect x="313.9" y="126.0" width="3.3" height="1.1" fill="#40f0d0" opacity="0.98"/><rect x="315.8" y="125.2" width="2.2" height="1.0" fill="#60e8ff" opacity="0.72"/><rect x="315.3" y="122.1" width="2.0" height="1.8" fill="#40f0d0" opacity="0.91"/><rect x="310.3" y="123.2" width="3.8" height="1.4" fill="#e8ffff" opacity="0.92"/><rect x="321.6" y="125.7" width="4.0" height="1.1" fill="#30d0a0" opacity="0.76"/><rect x="319.1" y="123.2" width="3.8" height="1.0" fill="#60e8ff" opacity="0.66"/><rect x="311.5" y="125.5" width="2.8" height="1.2" fill="#e8ffff" opacity="0.85"/><rect x="128.0" y="106.6" width="1.1" height="2.0" fill="#2060a0" opacity="0.43"/><rect x="118.5" y="103.8" width="1.1" height="1.2" fill="#2040a0" opacity="0.64"/><rect x="117.1" y="102.2" width="1.2" height="1.5" fill="#3070c0" opacity="0.31"/><rect x="126.0" y="101.1" width="1.1" height="2.4" fill="#30a0c0" opacity="0.31"/><rect x="117.0" y="101.4" width="1.9" height="1.9" fill="#2040a0" opacity="0.52"/><rect x="148.5" y="104.6" width="1.6" height="2.1" fill="#30a0c0" opacity="0.71"/><rect x="112.8" y="108.2" width="2.4" height="2.3" fill="#2040a0" opacity="0.56"/><rect x="110.4" y="115.3" width="2.0" height="2.4" fill="#2060a0" opacity="0.41"/><rect x="134.7" y="118.6" width="2.3" height="1.9" fill="#2060a0" opacity="0.36"/><rect x="139.5" y="115.6" width="1.7" height="1.7" fill="#3070c0" opacity="0.55"/><rect x="125.0" y="111.4" width="1.1" height="2.4" fill="#3070c0" opacity="0.52"/><rect x="133.7" y="112.5" width="2.4" height="1.2" fill="#3070c0" opacity="0.46"/><rect x="120.2" y="113.1" width="1.3" height="1.7" fill="#3070c0" opacity="0.33"/><rect x="148.7" y="115.8" width="2.3" height="1.2" fill="#30a0c0" opacity="0.72"/><rect x="136.0" y="119.7" width="2.2" height="2.2" fill="#2040a0" opacity="0.80"/><rect x="112.6" y="118.3" width="2.1" height="1.4" fill="#2040a0" opacity="0.53"/><rect x="259.7" y="118.2" width="1.3" height="1.4" fill="#30a0c0" opacity="0.34"/><rect x="262.1" y="116.5" width="1.7" height="1.4" fill="#3070c0" opacity="0.73"/><rect x="290.2" y="111.5" width="2.4" height="2.2" fill="#30a0c0" opacity="0.71"/><rect x="213.2" y="107.0" width="2.4" height="2.4" fill="#30a0c0" opacity="0.72"/><rect x="205.3" y="103.8" width="1.6" height="2.3" fill="#3070c0" opacity="0.75"/><rect x="199.3" y="120.7" width="1.3" height="1.9" fill="#30a0c0" opacity="0.58"/><rect x="319.3" y="107.9" width="2.2" height="2.0" fill="#2040a0" opacity="0.63"/><rect x="217.1" y="104.4" width="2.1" height="1.3" fill="#3070c0" opacity="0.32"/><rect x="226.2" y="105.4" width="1.5" height="1.9" fill="#2040a0" opacity="0.40"/><rect x="319.3" y="114.5" width="2.1" height="1.5" fill="#2040a0" opacity="0.68"/><rect x="216.0" y="101.5" width="1.4" height="1.6" fill="#3070c0" opacity="0.44"/><rect x="207.4" y="102.6" width="1.1" height="1.8" fill="#3070c0" opacity="0.42"/><rect x="265.3" y="106.0" width="2.3" height="1.4" fill="#2060a0" opacity="0.64"/><rect x="249.1" y="119.6" width="1.6" height="2.1" fill="#30a0c0" opacity="0.52"/><rect x="198.3" y="108.8" width="1.4" height="1.7" fill="#2040a0" opacity="0.45"/><rect x="280.3" y="114.1" width="1.4" height="1.6" fill="#30a0c0" opacity="0.60"/><rect x="302.6" y="108.1" width="1.4" height="1.2" fill="#2060a0" opacity="0.57"/><rect x="202.9" y="118.8" width="1.1" height="1.5" fill="#2040a0" opacity="0.32"/><rect x="266.7" y="114.6" width="2.5" height="2.2" fill="#2060a0" opacity="0.63"/><rect x="210.2" y="101.5" width="1.3" height="1.8" fill="#3070c0" opacity="0.64"/><rect x="268.7" y="120.4" width="2.5" height="2.5" fill="#3070c0" opacity="0.52"/><rect x="219.9" y="111.4" width="1.2" height="1.1" fill="#3070c0" opacity="0.63"/><rect x="292.7" y="119.6" width="1.8" height="1.9" fill="#3070c0" opacity="0.48"/><rect x="208.6" y="108.3" width="2.1" height="1.1" fill="#30a0c0" opacity="0.78"/><rect x="280.5" y="116.5" width="2.4" height="2.0" fill="#3070c0" opacity="0.69"/><rect x="205.6" y="109.8" width="1.0" height="2.3" fill="#2060a0" opacity="0.35"/><rect x="243.7" y="111.8" width="2.5" height="2.2" fill="#2060a0" opacity="0.45"/><rect x="256.0" y="102.6" width="1.9" height="1.2" fill="#2060a0" opacity="0.55"/><rect x="230.1" y="107.4" width="1.4" height="1.9" fill="#3070c0" opacity="0.33"/><rect x="218.3" y="109.5" width="1.8" height="1.7" fill="#2060a0" opacity="0.70"/><rect x="255.5" y="103.0" width="1.8" height="1.3" fill="#2060a0" opacity="0.51"/><rect x="191.4" y="103.2" width="2.2" height="2.1" fill="#3070c0" opacity="0.38"/><rect x="259.0" y="100.6" width="1.2" height="1.5" fill="#2060a0" opacity="0.49"/><rect x="228.9" y="104.5" width="1.8" height="2.0" fill="#3070c0" opacity="0.46"/><rect x="253.6" y="113.7" width="2.3" height="2.4" fill="#2060a0" opacity="0.50"/><rect x="228.9" y="115.5" width="1.4" height="1.6" fill="#3070c0" opacity="0.70"/><rect x="240.0" y="113.6" width="1.5" height="1.2" fill="#2040a0" opacity="0.72"/><rect x="198.0" y="111.1" width="1.8" height="1.6" fill="#30a0c0" opacity="0.64"/><rect x="282.7" y="100.7" width="1.5" height="2.4" fill="#3070c0" opacity="0.67"/><rect x="238.5" y="112.5" width="1.2" height="2.0" fill="#2040a0" opacity="0.78"/><rect x="237.5" y="112.6" width="1.6" height="1.5" fill="#2060a0" opacity="0.46"/><rect x="254.7" y="110.8" width="2.1" height="1.1" fill="#2060a0" opacity="0.41"/><rect x="266.6" y="117.0" width="2.4" height="2.0" fill="#2040a0" opacity="0.50"/><rect x="227.2" y="114.3" width="1.1" height="2.5" fill="#2040a0" opacity="0.46"/><rect x="231.3" y="117.2" width="2.2" height="2.0" fill="#2060a0" opacity="0.80"/><rect x="257.3" y="87.9" width="1.1" height="1.1" fill="#203890" opacity="0.40"/><rect x="285.3" y="92.3" width="1.7" height="1.2" fill="#203890" opacity="0.46"/><rect x="298.3" y="89.6" width="1.3" height="1.6" fill="#203890" opacity="0.57"/><rect x="298.0" y="83.4" width="1.1" height="1.7" fill="#203890" opacity="0.34"/><rect x="290.1" y="93.5" width="1.8" height="1.4" fill="#203890" opacity="0.57"/><rect x="286.5" y="96.7" width="2.0" height="1.4" fill="#203890" opacity="0.55"/><rect x="284.6" y="94.1" width="1.4" height="1.7" fill="#203890" opacity="0.50"/><rect x="211.0" y="97.4" width="1.1" height="1.3" fill="#203890" opacity="0.34"/><rect x="313.5" y="83.1" width="1.3" height="1.4" fill="#203890" opacity="0.57"/><rect x="311.4" y="84.0" width="1.7" height="1.5" fill="#203890" opacity="0.43"/><rect x="295.2" y="90.2" width="1.5" height="1.5" fill="#203890" opacity="0.56"/><rect x="292.1" y="86.5" width="1.0" height="1.8" fill="#203890" opacity="0.50"/><rect x="243.4" y="96.1" width="1.7" height="1.5" fill="#203890" opacity="0.48"/><rect x="253.9" y="95.4" width="1.1" height="1.7" fill="#203890" opacity="0.42"/><rect x="208.1" y="89.8" width="1.6" height="1.4" fill="#203890" opacity="0.42"/><rect x="202.6" y="98.4" width="1.8" height="1.3" fill="#203890" opacity="0.37"/><rect x="223.2" y="98.2" width="1.1" height="1.2" fill="#203890" opacity="0.42"/><rect x="262.3" y="87.7" width="1.1" height="1.2" fill="#203890" opacity="0.49"/><rect x="280.6" y="90.0" width="1.2" height="2.0" fill="#203890" opacity="0.41"/><rect x="216.6" y="89.8" width="1.5" height="1.4" fill="#203890" opacity="0.59"/><rect x="240.9" y="86.0" width="1.2" height="1.2" fill="#203890" opacity="0.60"/><rect x="302.9" y="94.8" width="1.3" height="1.2" fill="#203890" opacity="0.36"/><rect x="217.7" y="99.9" width="1.4" height="1.3" fill="#203890" opacity="0.33"/><rect x="293.9" y="96.1" width="1.6" height="1.8" fill="#203890" opacity="0.59"/><rect x="210.6" y="87.2" width="1.2" height="1.9" fill="#203890" opacity="0.50"/><rect x="101" y="0" width="2" height="128" fill="#f00000"/><path d="M103 0H109L103 6Z" fill="#f00"/><path d="M103 128V122L109 128Z" fill="#f00"/><rect x="148" y="0" width="2" height="128" fill="#0000f0"/><path d="M148 0H142L148 6Z" fill="#00f"/><path d="M148 128V122L142 128Z" fill="#00f"/></svg>
<div style="left:606px;top:201px;width:331px;height:15.5px;background:#0b0814;border-top:1px solid #6a9ee8;border-bottom:1px solid #6a9ee8;border-left:1px solid #6a9ee8;border-right:1px solid #6a9ee8"></div>
<div style="left:607px;top:202px;width:10px;height:13px;background:#5a8ee0"></div>
<div style="left:949px;top:63px;width:3px;height:146px;background:linear-gradient(90deg,#aca899,#fff 60%,#f4f3ee);border-radius:1.5px"></div>
<div style="left:973px;top:63px;width:3px;height:125px;background:linear-gradient(90deg,#aca899,#fff 60%,#f4f3ee);border-radius:1.5px"></div>
<div style="left:997px;top:63px;width:3px;height:125px;background:linear-gradient(90deg,#aca899,#fff 60%,#f4f3ee);border-radius:1.5px"></div>
<div style="left:939.5px;top:147.5px;width:21px;height:10px;background:linear-gradient(#fff,#e8e8e0);border:1px solid #8a9ab0;border-radius:2px;border-left:2px solid #30c030;border-right:2px solid #30c030"></div>
<div style="left:963.5px;top:121.5px;width:21px;height:10px;background:linear-gradient(#fff,#e8e8e0);border:1px solid #8a9ab0;border-radius:2px;border-left:2px solid #30c030;border-right:2px solid #30c030"></div>
<div style="left:987.5px;top:121.5px;width:21px;height:10px;background:linear-gradient(#f4f3ee,#e6e3d6);border:1px solid #cac6b4;border-radius:2px"></div>
<div style="left:961px;top:197.5px;width:47px;height:18px;background:#80ff80;border:1px solid #716f64;border-right-color:#fff;border-bottom-color:#fff"></div>
<svg style="left:977px;top:204px" width="15" height="8" viewBox="0 0 15 8"><path d="M1.5 0.5V6H13.5V0.5" stroke="#2b6cb0" stroke-width="2" fill="none"/><path d="M1.5 0.5V6H13.5V0.5" stroke="#30d0f0" stroke-width="0.8" fill="none"/></svg>
<svg style="left:612px;top:226px" width="12" height="10" viewBox="0 0 12 10"><path d="M5.5 1L1 5L5.5 9ZM10.5 1L6 5L10.5 9Z" fill="#111"/></svg>
<svg style="left:634px;top:226px" width="12" height="10" viewBox="0 0 12 10"><path d="M1 1L5.5 5L1 9ZM6 1L10.5 5L6 9Z" fill="#111"/></svg>
<div class="t" style="left:656px;top:224px;font-size:12px;color:#3a3af0;font-weight:bold;letter-spacing:-1px">]<span style="display:inline-block;width:6px"></span>[</div>
<svg style="left:661px;top:226px" width="6" height="10" viewBox="0 0 6 10"><path d="M1 1L5 5L1 9Z" fill="#111"/></svg>
<div class="t" style="left:678px;top:224px;font-size:12px;color:#f04040;font-weight:bold;letter-spacing:-1px">[<span style="display:inline-block;width:6px"></span>]</div>
<svg style="left:684px;top:226px" width="6" height="10" viewBox="0 0 6 10"><path d="M1 1L5 5L1 9Z" fill="#111"/></svg>
<div style="left:705px;top:226.5px;width:8px;height:8px;background:#6a6a64"></div>
<div style="left:722px;top:222px;width:1px;height:18px;background:#c5c2b2"></div>
<svg style="left:732px;top:225px" width="17" height="11" viewBox="0 0 17 11"><path d="M0 5.5H9" stroke="#c02020" stroke-width="1.2"/><path d="M5 2.5L9 5.5L5 8.5Z" fill="#000"/><path d="M12 1H10.5V10H12" stroke="#3a3af0" stroke-width="1.6" fill="none"/></svg>
<svg style="left:756px;top:225px" width="17" height="11" viewBox="0 0 17 11"><path d="M0.5 1H2V10H0.5" stroke="#3a3af0" stroke-width="1.6" fill="none"/><path d="M4 2.5L8 5.5L4 8.5Z" fill="#000"/><path d="M8 5.5H16" stroke="#c02020" stroke-width="1.2"/></svg>
<svg style="left:780px;top:225px" width="17" height="11" viewBox="0 0 17 11"><path d="M0.5 1H2V10H0.5" stroke="#3a3af0" stroke-width="1.6" fill="none"/><path d="M3 5.5H16" stroke="#c02020" stroke-width="1.2"/><path d="M12 2.5L8 5.5L12 8.5Z" fill="#000"/></svg>
<svg style="left:804px;top:225px" width="17" height="11" viewBox="0 0 17 11"><path d="M0 5.5H9" stroke="#c02020" stroke-width="1.2"/><path d="M5 2.5L9 5.5L5 8.5Z" fill="#000"/><path d="M12 1H13.5V10H12" stroke="#3a3af0" stroke-width="1.6" fill="none"/></svg>
<svg style="left:826px;top:225px" width="17" height="11" viewBox="0 0 17 11"><path d="M0.5 1H2V10H0.5" stroke="#3a3af0" stroke-width="1.6" fill="none"/><path d="M3 5.5H14" stroke="#e02020" stroke-width="2.5"/><path d="M11 2L16 5.5L11 9Z" fill="#e02020"/></svg>
<div style="left:849px;top:222px;width:1px;height:18px;background:#c5c2b2"></div>
<svg style="left:856px;top:225px" width="17" height="11" viewBox="0 0 17 11"><path d="M0 5.5H10" stroke="#40a040" stroke-width="1.2"/><path d="M12.5 1H11V10H12.5" stroke="#3a3af0" stroke-width="1.6" fill="none"/></svg>
<svg style="left:880px;top:225px" width="17" height="11" viewBox="0 0 17 11"><path d="M1 1H2.5V10H1" stroke="#3a3af0" stroke-width="1.6" fill="none"/><path d="M4 5.5H15" stroke="#40a040" stroke-width="1.2"/></svg>
<div style="left:901px;top:222px;width:1px;height:18px;background:#c5c2b2"></div>
<svg style="left:908px;top:223px" width="15" height="14" viewBox="0 0 15 14"><path d="M1.5 7.5L5.5 11.5L13.5 2" stroke="#20b020" stroke-width="2.2" fill="none"/></svg>
<svg style="left:933px;top:225px" width="13" height="11" viewBox="0 0 13 11"><path d="M0.5 3H6V0.5L12 5.5L6 10.5V8H0.5Z" fill="#10c8f0" stroke="#205080" stroke-width="0.6"/></svg>
<div style="left:955px;top:222px;width:1px;height:18px;background:#c5c2b2"></div>
<svg style="left:962px;top:222px" width="17" height="17" viewBox="0 0 17 17"><path d="M2 6L6 10L14 1" stroke="#20b020" stroke-width="2" fill="none"/><text x="8.5" y="16" text-anchor="middle" font-family="Liberation Sans" font-weight="bold" font-size="5.5" fill="#2020d0">AUTO</text></svg>
<div style="left:983px;top:220.5px;width:22.5px;height:21px;background:#fdfdfb;border:1px solid #7a9ac8;border-radius:3px"></div>
<svg style="left:986px;top:223px" width="17" height="16" viewBox="0 0 17 16"><path d="M1 6H9V3L15 8L9 13V10H1Z" fill="#3a80e8" stroke="#1a3a90" stroke-width="0.6"/><path d="M3 8L7 12L14 2" stroke="#20c020" stroke-width="2" fill="none"/></svg>
<div style="left:1007px;top:220.5px;width:8px;height:21px;background:#fdfdfb;border:1px solid #7a9ac8;border-radius:3px 0 0 3px"></div>
<div style="left:601px;top:250px;width:414px;height:253px;border-left:1px solid #fff;border-top:1px solid #fff;border-right:1px solid #716f64;border-bottom:1px solid #716f64"></div>
<div style="left:606px;top:260px;width:13px;height:13px;background:linear-gradient(135deg,#dcdcd7,#fff);border:1px solid #1c5180"></div>
<div class="t" style="left:621.5px;top:262px;font-size:11.5px;color:#000">Comment</div>
<div style="left:675px;top:256.5px;width:110px;height:20.5px;background:#fff;border:1px solid #7f9db9"><div class="t" style="position:static;padding-left:5px;font-size:11px;line-height:18.5px">Single</div></div>
<div style="left:767.5px;top:258.5px;width:16px;height:16.5px;background:linear-gradient(135deg,#dce8fc,#b4c8f4);border:1px solid #c4d4f4;border-radius:2px"></div>
<svg style="left:771.0px;top:263.75px" width="9" height="6" viewBox="0 0 9 6"><path d="M1.2 1.2L4.5 4.5L7.8 1.2" stroke="#4d6185" stroke-width="2" fill="none"/></svg>
<div style="left:791px;top:256.5px;width:36px;height:20.5px;background:linear-gradient(#fefefd,#f4f3ee 60%,#e6e3d6);border:1px solid #1c5180;border-radius:3px"><div class="t" style="position:static;text-align:center;font-size:11.5px;line-height:18.5px">Edit</div></div>
<div style="left:833px;top:256.5px;width:110px;height:20.5px;background:#fff;border:1px solid #7f9db9"><div class="t" style="position:static;padding-left:5px;font-size:11px;line-height:18.5px">NTP</div></div>
<div style="left:925.5px;top:258.5px;width:16px;height:16.5px;background:linear-gradient(135deg,#dce8fc,#b4c8f4);border:1px solid #c4d4f4;border-radius:2px"></div>
<svg style="left:929.0px;top:263.75px" width="9" height="6" viewBox="0 0 9 6"><path d="M1.2 1.2L4.5 4.5L7.8 1.2" stroke="#4d6185" stroke-width="2" fill="none"/></svg>
<div style="left:948px;top:256.5px;width:31px;height:20.5px;background:#fff;border:1px solid #7f9db9"><div class="t" style="position:static;padding-left:3px;font-size:11px;line-height:18.5px"><span style="color:#aca899">E</span></div></div>
<div style="left:962px;top:258.5px;width:16px;height:16.5px;background:linear-gradient(135deg,#dce8fc,#b4c8f4);border:1px solid #c4d4f4;border-radius:2px"></div>
<svg style="left:965.5px;top:263.75px" width="9" height="6" viewBox="0 0 9 6"><path d="M1.2 1.2L4.5 4.5L7.8 1.2" stroke="#4d6185" stroke-width="2" fill="none"/></svg>
<div style="left:979.5px;top:256.5px;width:30px;height:20.5px;background:#fff;border:1px solid #7f9db9"><div class="t" style="position:static;text-align:center;font-size:11px;line-height:18.5px">14</div></div>
<div style="left:606.5px;top:281px;width:31px;height:20.5px;background:#fff;border:1px solid #7f9db9"><div class="t" style="position:static;padding-left:4px;font-size:11px;line-height:18.5px">0</div></div>
<div style="left:640px;top:281.5px;width:15px;height:20px;background:#fff"></div>
<div style="left:640.5px;top:282px;width:14px;height:9.5px;background:linear-gradient(135deg,#dce8fc,#b4c8f4);border:1px solid #c4d4f4;border-radius:2px"></div>
<div style="left:640.5px;top:291.5px;width:14px;height:9.5px;background:linear-gradient(135deg,#dce8fc,#b4c8f4);border:1px solid #c4d4f4;border-radius:2px"></div>
<svg style="left:643px;top:284px" width="9" height="5" viewBox="0 0 9 5"><path d="M1 4L4.5 1L8 4" stroke="#4d6185" stroke-width="1.8" fill="none"/></svg>
<svg style="left:643px;top:294px" width="9" height="5" viewBox="0 0 9 5"><path d="M1 1L4.5 4L8 1" stroke="#4d6185" stroke-width="1.8" fill="none"/></svg>
<div style="left:661px;top:281px;width:66px;height:20.5px;background:#fff;border:1px solid #7f9db9"><div class="t" style="position:static;text-align:center;font-size:11px;line-height:18.5px">0:00:02.02</div></div>
<div style="left:727.5px;top:281px;width:65px;height:20.5px;background:#fff;border:1px solid #7f9db9"><div class="t" style="position:static;text-align:center;font-size:11px;line-height:18.5px">0:00:02.96</div></div>
<div style="left:798.5px;top:281px;width:65.5px;height:20.5px;background:#fff;border:1px solid #7f9db9"><div class="t" style="position:static;text-align:center;font-size:11px;line-height:18.5px">0:00:00.94</div></div>
<div style="left:869px;top:281px;width:40px;height:20.5px;background:#fff;border:1px solid #7f9db9"><div class="t" style="position:static;text-align:center;font-size:11px;line-height:18.5px">0</div></div>
<div style="left:909px;top:281px;width:40px;height:20.5px;background:#fff;border:1px solid #7f9db9"><div class="t" style="position:static;text-align:center;font-size:11px;line-height:18.5px">0</div></div>
<div style="left:949px;top:281px;width:39.5px;height:20.5px;background:#fff;border:1px solid #7f9db9"><div class="t" style="position:static;text-align:center;font-size:11px;line-height:18.5px">0</div></div>
<div style="left:607px;top:306.5px;width:21.5px;height:21.5px;background:linear-gradient(#fefefd,#f4f3ee 60%,#e6e3d6);border:1px solid #1c5180;border-radius:3px"><div class="t" style="position:static;text-align:center;line-height:19px"><b style="font-size:13px">B</b></div></div>
<div style="left:631px;top:306.5px;width:21.5px;height:21.5px;background:linear-gradient(#fefefd,#f4f3ee 60%,#e6e3d6);border:1px solid #1c5180;border-radius:3px"><div class="t" style="position:static;text-align:center;line-height:19px"><i style="font-size:12px">/</i></div></div>
<div style="left:655px;top:306.5px;width:21.5px;height:21.5px;background:linear-gradient(#fefefd,#f4f3ee 60%,#e6e3d6);border:1px solid #1c5180;border-radius:3px"><div class="t" style="position:static;text-align:center;line-height:19px"><u style="font-size:12px">U</u></div></div>
<div style="left:679px;top:306.5px;width:21.5px;height:21.5px;background:linear-gradient(#fefefd,#f4f3ee 60%,#e6e3d6);border:1px solid #1c5180;border-radius:3px"><div class="t" style="position:static;text-align:center;line-height:19px"><s style="font-size:12px">S</s></div></div>
<div style="left:703.5px;top:306.5px;width:21.5px;height:21.5px;background:linear-gradient(#fefefd,#f4f3ee 60%,#e6e3d6);border:1px solid #1c5180;border-radius:3px"><div class="t" style="position:static;text-align:center;line-height:19px"><i style="font-size:12px;font-weight:bold">fn</i></div></div>
<div style="left:732.5px;top:306.5px;width:21.5px;height:21.5px;background:linear-gradient(#fefefd,#f4f3ee 60%,#e6e3d6);border:1px solid #1c5180;border-radius:3px"><div class="t" style="position:static;text-align:center;line-height:19px;font-size:12px;font-weight:bold;letter-spacing:-0.8px"><span style="color:#f00">A</span>B</div></div>
<div style="left:756px;top:306.5px;width:21.5px;height:21.5px;background:linear-gradient(#fefefd,#f4f3ee 60%,#e6e3d6);border:1px solid #1c5180;border-radius:3px"><div class="t" style="position:static;text-align:center;line-height:19px;font-size:12px;font-weight:bold;letter-spacing:-0.8px">A<span style="color:#f00">B</span></div></div>
<div style="left:780.5px;top:306.5px;width:21.5px;height:21.5px;background:linear-gradient(#fefefd,#f4f3ee 60%,#e6e3d6);border:1px solid #1c5180;border-radius:3px"><div class="t" style="position:static;text-align:center;line-height:19px;font-size:12px;font-weight:bold;letter-spacing:-0.8px"><span style="text-shadow:0 0 1.5px #f00,0 0 1px #f00">AB</span></div></div>
<div style="left:804.5px;top:306.5px;width:21.5px;height:21.5px;background:linear-gradient(#fefefd,#f4f3ee 60%,#e6e3d6);border:1px solid #1c5180;border-radius:3px"><div class="t" style="position:static;text-align:center;line-height:19px;font-size:12px;font-weight:bold;letter-spacing:-0.8px"><span style="text-shadow:1px 1px 0 #f00">AB</span></div></div>
<div style="left:833px;top:306.5px;width:22px;height:21.5px;background:linear-gradient(#fefefd,#f4f3ee 60%,#e6e3d6);border:1px solid #1c5180;border-radius:3px"></div>
<svg style="left:837px;top:310px" width="14" height="14" viewBox="0 0 14 14"><path d="M1.5 7L5 11L12.5 2" stroke="#20b020" stroke-width="2.2" fill="none"/></svg>
<div style="left:865.5px;top:310.5px;width:13px;height:13px;background:linear-gradient(135deg,#dcdcd7,#fff);border:1px solid #1c5180;border-radius:50%"></div>
<div style="left:869.5px;top:314.5px;width:5px;height:5px;background:radial-gradient(#5ad05a,#20a020);border-radius:50%"></div>
<div class="t" style="left:882px;top:312px;font-size:11.5px;color:#000">Time</div>
<div style="left:911.5px;top:310.5px;width:13px;height:13px;background:linear-gradient(135deg,#dcdcd7,#fff);border:1px solid #1c5180;border-radius:50%"></div>
<div class="t" style="left:928px;top:312px;font-size:11.5px;color:#000">Frame</div>
<div style="left:966px;top:310.5px;width:13px;height:13px;background:linear-gradient(135deg,#dcdcd7,#fff);border:1px solid #1c5180"></div>
<div class="t" style="left:982px;top:312px;font-size:11.5px;color:#000">Show</div>
<div style="left:606px;top:332px;width:403px;height:165px;background:#fff;border-left:2px solid #716f64;border-top:2px solid #716f64;border-right:1px solid #f1efe2;border-bottom:1px solid #f1efe2"></div>
<div style="left:607px;top:333px;width:401px;height:1px;background:#aca899"></div>
<div class="t" style="left:608.5px;top:337.5px;font-size:12.4px;color:#000">Hallo everybody</div>
<svg style="left:608px;top:346.5px" width="28" height="3" viewBox="0 0 28 3"><path d="M0 1.5L1.5 0.5L3 2L4.5 0.5L6 2L7.5 0.5L9 2L10.5 0.5L12 2L13.5 0.5L15 2L16.5 0.5L18 2L19.5 0.5L21 2L22.5 0.5L24 2L25.5 0.5L27 2" stroke="#e02020" stroke-width="1" fill="none"/></svg>
<div style="left:0px;top:509px;width:1016px;height:1px;background:#716f64"></div>
<div style="left:0px;top:510px;width:1002px;height:178px;background:#fff"></div>
<div style="left:0px;top:510px;width:1002px;height:17px;background:#a6cee8"></div>
<div style="left:20.5px;top:510px;width:1px;height:177px;background:#c0c0c0"></div>
<div style="left:84.5px;top:510px;width:1px;height:177px;background:#c0c0c0"></div>
<div style="left:148.5px;top:510px;width:1px;height:177px;background:#c0c0c0"></div>
<div style="left:177.5px;top:510px;width:1px;height:177px;background:#c0c0c0"></div>
<div style="left:228.5px;top:510px;width:1px;height:177px;background:#c0c0c0"></div>
<div style="left:264.5px;top:510px;width:1px;height:177px;background:#c0c0c0"></div>
<div class="t" style="left:0px;top:514px;width:20.5px;text-align:center;font-size:11px;color:#000">#</div>
<div class="t" style="left:20.5px;top:514px;width:64.0px;text-align:center;font-size:11px;color:#000">Start</div>
<div class="t" style="left:84.5px;top:514px;width:64.0px;text-align:center;font-size:11px;color:#000">End</div>
<div class="t" style="left:148.5px;top:514px;width:29.0px;text-align:center;font-size:11px;color:#000">CPS</div>
<div class="t" style="left:180.5px;top:514px;font-size:11px;color:#000">Style</div>
<div class="t" style="left:231.5px;top:514px;font-size:11px;color:#000">Actor</div>
<div class="t" style="left:267.5px;top:514px;font-size:11px;color:#000">Text</div>
<div style="left:0px;top:527px;width:1002px;height:160px;overflow:hidden">
<div style="left:20.5px;top:0px;width:981.5px;height:17px;background:#ccffe5"></div>
<div style="left:0px;top:0px;width:20.5px;height:17px;background:#c4e4c4"></div>
<div style="left:20.5px;top:0px;width:1px;height:17px;background:#c0c0c0"></div>
<div style="left:84.5px;top:0px;width:1px;height:17px;background:#c0c0c0"></div>
<div style="left:148.5px;top:0px;width:1px;height:17px;background:#c0c0c0"></div>
<div style="left:177.5px;top:0px;width:1px;height:17px;background:#c0c0c0"></div>
<div style="left:228.5px;top:0px;width:1px;height:17px;background:#c0c0c0"></div>
<div style="left:264.5px;top:0px;width:1px;height:17px;background:#c0c0c0"></div>
<div style="left:0px;top:16px;width:1002px;height:1px;background:#c0c0c0"></div>
<div class="t" style="left:0px;top:3.5px;width:20.5px;text-align:center;font-size:11px;color:#000">1</div>
<div class="t" style="left:20.5px;top:3.5px;width:64.0px;text-align:center;font-size:11px;color:#000">0:00:02.02</div>
<div class="t" style="left:84.5px;top:3.5px;width:64.0px;text-align:center;font-size:11px;color:#000">0:00:02.96</div>
<div class="t" style="left:148.5px;top:3.5px;width:29.0px;text-align:center;font-size:11px;color:#000">14</div>
<div class="t" style="left:180.5px;top:3.5px;font-size:11px;color:#000">Single</div>
<div class="t" style="left:231.5px;top:3.5px;font-size:11px;color:#000">NTP</div>
<div class="t" style="left:267.5px;top:3.5px;font-size:11px;color:#000">Hallo everybody</div>
<div style="left:20.5px;top:17px;width:981.5px;height:17px;background:#fff"></div>
<div style="left:0px;top:17px;width:20.5px;height:17px;background:#c4e4c4"></div>
<div style="left:20.5px;top:17px;width:1px;height:17px;background:#c0c0c0"></div>
<div style="left:84.5px;top:17px;width:1px;height:17px;background:#c0c0c0"></div>
<div style="left:148.5px;top:17px;width:1px;height:17px;background:#c0c0c0"></div>
<div style="left:177.5px;top:17px;width:1px;height:17px;background:#c0c0c0"></div>
<div style="left:228.5px;top:17px;width:1px;height:17px;background:#c0c0c0"></div>
<div style="left:264.5px;top:17px;width:1px;height:17px;background:#c0c0c0"></div>
<div style="left:0px;top:33px;width:1002px;height:1px;background:#c0c0c0"></div>
<div class="t" style="left:0px;top:20.5px;width:20.5px;text-align:center;font-size:11px;color:#000">2</div>
<div class="t" style="left:20.5px;top:20.5px;width:64.0px;text-align:center;font-size:11px;color:#000">0:00:03.19</div>
<div class="t" style="left:84.5px;top:20.5px;width:64.0px;text-align:center;font-size:11px;color:#000">0:00:06.85</div>
<div class="t" style="left:148.5px;top:20.5px;width:29.0px;text-align:center;font-size:11px;color:#000">13</div>
<div class="t" style="left:180.5px;top:20.5px;font-size:11px;color:#000">*Default</div>
<div class="t" style="left:231.5px;top:20.5px;font-size:11px;color:#000">NTP</div>
<div class="t" style="left:267.5px;top:20.5px;font-size:11px;color:#000">and this is the YuoTube channel\Nwhat we have which is cool</div>
<div style="left:20.5px;top:34px;width:981.5px;height:17px;background:#fff"></div>
<div style="left:0px;top:34px;width:20.5px;height:17px;background:#c4e4c4"></div>
<div style="left:20.5px;top:34px;width:1px;height:17px;background:#c0c0c0"></div>
<div style="left:84.5px;top:34px;width:1px;height:17px;background:#c0c0c0"></div>
<div style="left:148.5px;top:34px;width:1px;height:17px;background:#c0c0c0"></div>
<div style="left:177.5px;top:34px;width:1px;height:17px;background:#c0c0c0"></div>
<div style="left:228.5px;top:34px;width:1px;height:17px;background:#c0c0c0"></div>
<div style="left:264.5px;top:34px;width:1px;height:17px;background:#c0c0c0"></div>
<div style="left:0px;top:50px;width:1002px;height:1px;background:#c0c0c0"></div>
<div class="t" style="left:0px;top:37.5px;width:20.5px;text-align:center;font-size:11px;color:#000">3</div>
<div class="t" style="left:20.5px;top:37.5px;width:64.0px;text-align:center;font-size:11px;color:#000">0:00:06.88</div>
<div class="t" style="left:84.5px;top:37.5px;width:64.0px;text-align:center;font-size:11px;color:#000">0:00:10.71</div>
<div class="t" style="left:148.5px;top:37.5px;width:29.0px;text-align:center;font-size:11px;color:#000">13</div>
<div class="t" style="left:180.5px;top:37.5px;font-size:11px;color:#000">*Default</div>
<div class="t" style="left:231.5px;top:37.5px;font-size:11px;color:#000">NTP</div>
<div class="t" style="left:267.5px;top:37.5px;font-size:11px;color:#000">Translation Aids and you are more than\Nwelcome to subscribe,</div>
<div style="left:20.5px;top:51px;width:981.5px;height:17px;background:#fff"></div>
<div style="left:0px;top:51px;width:20.5px;height:17px;background:#c4e4c4"></div>
<div style="left:20.5px;top:51px;width:1px;height:17px;background:#c0c0c0"></div>
<div style="left:84.5px;top:51px;width:1px;height:17px;background:#c0c0c0"></div>
<div style="left:148.5px;top:51px;width:1px;height:17px;background:#c0c0c0"></div>
<div style="left:177.5px;top:51px;width:1px;height:17px;background:#c0c0c0"></div>
<div style="left:228.5px;top:51px;width:1px;height:17px;background:#c0c0c0"></div>
<div style="left:264.5px;top:51px;width:1px;height:17px;background:#c0c0c0"></div>
<div style="left:0px;top:67px;width:1002px;height:1px;background:#c0c0c0"></div>
<div class="t" style="left:0px;top:54.5px;width:20.5px;text-align:center;font-size:11px;color:#000">4</div>
<div class="t" style="left:20.5px;top:54.5px;width:64.0px;text-align:center;font-size:11px;color:#000">0:00:11.27</div>
<div class="t" style="left:84.5px;top:54.5px;width:64.0px;text-align:center;font-size:11px;color:#000">0:00:17.21</div>
<div class="t" style="left:148.5px;top:54.5px;width:29.0px;text-align:center;font-size:11px;color:#000">8</div>
<div class="t" style="left:180.5px;top:54.5px;font-size:11px;color:#000">*Default</div>
<div class="t" style="left:231.5px;top:54.5px;font-size:11px;color:#000">NTP</div>
<div class="t" style="left:267.5px;top:54.5px;font-size:11px;color:#000">we have 17 described now\Nand then we will be continually and</div>
<div style="left:20.5px;top:68px;width:981.5px;height:17px;background:#fff"></div>
<div style="left:0px;top:68px;width:20.5px;height:17px;background:#c4e4c4"></div>
<div style="left:20.5px;top:68px;width:1px;height:17px;background:#c0c0c0"></div>
<div style="left:84.5px;top:68px;width:1px;height:17px;background:#c0c0c0"></div>
<div style="left:148.5px;top:68px;width:1px;height:17px;background:#c0c0c0"></div>
<div style="left:177.5px;top:68px;width:1px;height:17px;background:#c0c0c0"></div>
<div style="left:228.5px;top:68px;width:1px;height:17px;background:#c0c0c0"></div>
<div style="left:264.5px;top:68px;width:1px;height:17px;background:#c0c0c0"></div>
<div style="left:0px;top:84px;width:1002px;height:1px;background:#c0c0c0"></div>
<div class="t" style="left:0px;top:71.5px;width:20.5px;text-align:center;font-size:11px;color:#000">5</div>
<div class="t" style="left:20.5px;top:71.5px;width:64.0px;text-align:center;font-size:11px;color:#000">0:00:18.28</div>
<div class="t" style="left:84.5px;top:71.5px;width:64.0px;text-align:center;font-size:11px;color:#000">0:00:20.50</div>
<div class="t" style="left:148.5px;top:71.5px;width:29.0px;text-align:center;font-size:11px;color:#000">15</div>
<div class="t" style="left:180.5px;top:71.5px;font-size:11px;color:#000">*Default</div>
<div class="t" style="left:231.5px;top:71.5px;font-size:11px;color:#000">NTP</div>
<div class="t" style="left:267.5px;top:71.5px;font-size:11px;color:#000">instructional videos\Nevery now and then</div>
<div style="left:20.5px;top:85px;width:981.5px;height:17px;background:#fff"></div>
<div style="left:0px;top:85px;width:20.5px;height:17px;background:#c4e4c4"></div>
<div style="left:20.5px;top:85px;width:1px;height:17px;background:#c0c0c0"></div>
<div style="left:84.5px;top:85px;width:1px;height:17px;background:#c0c0c0"></div>
<div style="left:148.5px;top:85px;width:1px;height:17px;background:#c0c0c0"></div>
<div style="left:177.5px;top:85px;width:1px;height:17px;background:#c0c0c0"></div>
<div style="left:228.5px;top:85px;width:1px;height:17px;background:#c0c0c0"></div>
<div style="left:264.5px;top:85px;width:1px;height:17px;background:#c0c0c0"></div>
<div style="left:0px;top:101px;width:1002px;height:1px;background:#c0c0c0"></div>
<div class="t" style="left:0px;top:88.5px;width:20.5px;text-align:center;font-size:11px;color:#000">6</div>
<div class="t" style="left:20.5px;top:88.5px;width:64.0px;text-align:center;font-size:11px;color:#000">0:00:21.26</div>
<div class="t" style="left:84.5px;top:88.5px;width:64.0px;text-align:center;font-size:11px;color:#000">0:00:24.27</div>
<div class="t" style="left:148.5px;top:88.5px;width:29.0px;text-align:center;font-size:11px;color:#000">6</div>
<div class="t" style="left:180.5px;top:88.5px;font-size:11px;color:#000">Single</div>
<div class="t" style="left:231.5px;top:88.5px;font-size:11px;color:#000">NTP</div>
<div class="t" style="left:267.5px;top:88.5px;font-size:11px;color:#000">as been made pops up and</div>
<div style="left:20.5px;top:102px;width:981.5px;height:17px;background:#fffbe6"></div>
<div style="left:0px;top:102px;width:20.5px;height:17px;background:#c4e4c4"></div>
<div style="left:20.5px;top:102px;width:1px;height:17px;background:#c0c0c0"></div>
<div style="left:84.5px;top:102px;width:1px;height:17px;background:#c0c0c0"></div>
<div style="left:148.5px;top:102px;width:1px;height:17px;background:#c0c0c0"></div>
<div style="left:177.5px;top:102px;width:1px;height:17px;background:#c0c0c0"></div>
<div style="left:228.5px;top:102px;width:1px;height:17px;background:#c0c0c0"></div>
<div style="left:264.5px;top:102px;width:1px;height:17px;background:#c0c0c0"></div>
<div style="left:0px;top:118px;width:1002px;height:1px;background:#c0c0c0"></div>
<div class="t" style="left:0px;top:105.5px;width:20.5px;text-align:center;font-size:11px;color:#000">7</div>
<div class="t" style="left:20.5px;top:105.5px;width:64.0px;text-align:center;font-size:11px;color:#000">0:00:25.16</div>
<div class="t" style="left:84.5px;top:105.5px;width:64.0px;text-align:center;font-size:11px;color:#000">0:00:29.10</div>
<div class="t" style="left:148.5px;top:105.5px;width:29.0px;text-align:center;font-size:11px;color:#000">9</div>
<div class="t" style="left:180.5px;top:105.5px;font-size:11px;color:#000">*Default</div>
<div class="t" style="left:231.5px;top:105.5px;font-size:11px;color:#000">NTP</div>
<div class="t" style="left:267.5px;top:105.5px;font-size:11px;color:#000">what I'm going to do today is\NI'm gonna show you</div>
<div style="left:20.5px;top:119px;width:981.5px;height:17px;background:#fff"></div>
<div style="left:0px;top:119px;width:20.5px;height:17px;background:#c4e4c4"></div>
<div style="left:20.5px;top:119px;width:1px;height:17px;background:#c0c0c0"></div>
<div style="left:84.5px;top:119px;width:1px;height:17px;background:#c0c0c0"></div>
<div style="left:148.5px;top:119px;width:1px;height:17px;background:#c0c0c0"></div>
<div style="left:177.5px;top:119px;width:1px;height:17px;background:#c0c0c0"></div>
<div style="left:228.5px;top:119px;width:1px;height:17px;background:#c0c0c0"></div>
<div style="left:264.5px;top:119px;width:1px;height:17px;background:#c0c0c0"></div>
<div style="left:0px;top:135px;width:1002px;height:1px;background:#c0c0c0"></div>
<div class="t" style="left:0px;top:122.5px;width:20.5px;text-align:center;font-size:11px;color:#000">8</div>
<div class="t" style="left:20.5px;top:122.5px;width:64.0px;text-align:center;font-size:11px;color:#000">0:00:30.03</div>
<div class="t" style="left:84.5px;top:122.5px;width:64.0px;text-align:center;font-size:11px;color:#000">0:00:33.58</div>
<div class="t" style="left:148.5px;top:122.5px;width:29.0px;text-align:center;font-size:11px;color:#000">9</div>
<div class="t" style="left:180.5px;top:122.5px;font-size:11px;color:#000">*Default</div>
<div class="t" style="left:231.5px;top:122.5px;font-size:11px;color:#000">NTP</div>
<div class="t" style="left:267.5px;top:122.5px;font-size:11px;color:#000">how to insert previously\Ntranslated</div>
<div style="left:20.5px;top:136px;width:981.5px;height:17px;background:#fff"></div>
<div style="left:0px;top:136px;width:20.5px;height:17px;background:#c4e4c4"></div>
<div style="left:20.5px;top:136px;width:1px;height:17px;background:#c0c0c0"></div>
<div style="left:84.5px;top:136px;width:1px;height:17px;background:#c0c0c0"></div>
<div style="left:148.5px;top:136px;width:1px;height:17px;background:#c0c0c0"></div>
<div style="left:177.5px;top:136px;width:1px;height:17px;background:#c0c0c0"></div>
<div style="left:228.5px;top:136px;width:1px;height:17px;background:#c0c0c0"></div>
<div style="left:264.5px;top:136px;width:1px;height:17px;background:#c0c0c0"></div>
<div style="left:0px;top:152px;width:1002px;height:1px;background:#c0c0c0"></div>
<div class="t" style="left:0px;top:139.5px;width:20.5px;text-align:center;font-size:11px;color:#000">9</div>
<div class="t" style="left:20.5px;top:139.5px;width:64.0px;text-align:center;font-size:11px;color:#000">0:00:33.61</div>
<div class="t" style="left:84.5px;top:139.5px;width:64.0px;text-align:center;font-size:11px;color:#000">0:00:37.58</div>
<div class="t" style="left:148.5px;top:139.5px;width:29.0px;text-align:center;font-size:11px;color:#000">13</div>
<div class="t" style="left:180.5px;top:139.5px;font-size:11px;color:#000">*Default</div>
<div class="t" style="left:231.5px;top:139.5px;font-size:11px;color:#000">NTP</div>
<div class="t" style="left:267.5px;top:139.5px;font-size:11px;color:#000">text,gm let's say it's an advertisement\Nthat you have translation</div>
<div style="left:20.5px;top:153px;width:981.5px;height:17px;background:#fff"></div>
<div style="left:0px;top:153px;width:20.5px;height:17px;background:#c4e4c4"></div>
<div style="left:20.5px;top:153px;width:1px;height:17px;background:#c0c0c0"></div>
<div style="left:84.5px;top:153px;width:1px;height:17px;background:#c0c0c0"></div>
<div style="left:148.5px;top:153px;width:1px;height:17px;background:#c0c0c0"></div>
<div style="left:177.5px;top:153px;width:1px;height:17px;background:#c0c0c0"></div>
<div style="left:228.5px;top:153px;width:1px;height:17px;background:#c0c0c0"></div>
<div style="left:264.5px;top:153px;width:1px;height:17px;background:#c0c0c0"></div>
<div style="left:0px;top:169px;width:1002px;height:1px;background:#c0c0c0"></div>
<div class="t" style="left:0px;top:156.5px;width:20.5px;text-align:center;font-size:11px;color:#000">10</div>
<div class="t" style="left:20.5px;top:156.5px;width:64.0px;text-align:center;font-size:11px;color:#000">0:00:37.71</div>
<div class="t" style="left:84.5px;top:156.5px;width:64.0px;text-align:center;font-size:11px;color:#000">0:00:40.40</div>
<div class="t" style="left:148.5px;top:156.5px;width:29.0px;text-align:center;font-size:11px;color:#000">10</div>
<div class="t" style="left:180.5px;top:156.5px;font-size:11px;color:#000">*Default</div>
<div class="t" style="left:231.5px;top:156.5px;font-size:11px;color:#000">NTP</div>
<div class="t" style="left:267.5px;top:156.5px;font-size:11px;color:#000">...and is made of and\Nand making translation for some stable</div>
</div>
<div style="left:0px;top:527px;width:1002px;height:1px;background:#ff40ff"></div>
<div style="left:0px;top:543.5px;width:1002px;height:1.2px;background:#ff40ff"></div>
<div style="left:1001px;top:527px;width:1px;height:17px;background:#ff40ff"></div>
<div style="left:1002px;top:509px;width:14px;height:179px;background:linear-gradient(90deg,#fefefb,#f3f1e7)"></div>
<div style="left:1002px;top:510px;width:14px;height:17px;background:linear-gradient(135deg,#dce8fc,#b4c8f4);border:1px solid #c4d4f4;border-radius:2px"></div>
<svg style="left:1004px;top:514px" width="10" height="8" viewBox="0 0 10 8"><path d="M1.5 6L5 2.5L8.5 6" stroke="#4d6185" stroke-width="2" fill="none"/></svg>
<div style="left:1002px;top:528px;width:14px;height:13px;background:linear-gradient(135deg,#dce8fc,#b4c8f4);border:1px solid #c4d4f4;border-radius:2px"></div>
<div style="left:1002px;top:670px;width:14px;height:17px;background:linear-gradient(135deg,#dce8fc,#b4c8f4);border:1px solid #c4d4f4;border-radius:2px"></div>
<svg style="left:1004px;top:675px" width="10" height="8" viewBox="0 0 10 8"><path d="M1.5 2L5 5.5L8.5 2" stroke="#4d6185" stroke-width="2" fill="none"/></svg>
<div style="left:0px;top:687px;width:1016px;height:1.5px;background:#aca899"></div>
<div style="left:0px;top:688.5px;width:1016px;height:21.5px;background:#ece9d8"></div>
<div style="left:497.5px;top:692px;width:1px;height:16px;background:#aca899"></div>
<div style="left:498.5px;top:692px;width:1px;height:16px;background:#fff"></div>
<div style="left:0px;top:710px;width:1016px;height:33px;background:linear-gradient(#3168d5 0%,#4a8ef0 6%,#2a66e0 14%,#245edb 50%,#2258d8 88%,#1a48b8 100%)"></div>
<div style="left:0px;top:710px;width:1016px;height:1px;background:#0b3aa8"></div>
<div style="left:0px;top:711px;width:1016px;height:1px;background:#5a8ee8"></div>
<div style="left:0px;top:714px;width:93px;height:29px;background:linear-gradient(#3a8e3a 0%,#5aae5a 12%,#3c9a3c 30%,#3a9a3a 60%,#44aa44 90%,#3a8a3a 100%);border-radius:0 14px 14px 0/0 50% 50% 0;box-shadow:inset -3px 0 3px rgba(0,40,0,.35)"></div>
<svg style="left:6px;top:719px" width="20" height="19" viewBox="0 0 20 19"><path d="M3 2Q6 0 11 2L10 8Q6 6 2 8Z" fill="#f0602a"/><path d="M12 3Q15 4.5 19 4L18 10Q14 11 11 9Z" fill="#70c830"/><path d="M1.5 9Q5 7 9.5 9L8.5 15Q5 13 0.5 15Z" fill="#4a8ef0"/><path d="M10.5 10Q14 12 17.5 11L16.5 17Q13 18 9.5 16Z" fill="#f8d020"/></svg>
<div class="t" style="left:30.5px;top:720px;font-size:17.5px;font-weight:bold;font-style:italic;color:#fff;text-shadow:1px 1px 1px #1a4a1a">start</div>
<div style="left:104px;top:719px;width:2px;height:2px;background:#0a2a70"></div>
<div style="left:103px;top:722px;width:2px;height:2px;background:#0a2a70"></div>
<div style="left:104px;top:725px;width:2px;height:2px;background:#0a2a70"></div>
<div style="left:103px;top:728px;width:2px;height:2px;background:#0a2a70"></div>
<div style="left:104px;top:731px;width:2px;height:2px;background:#0a2a70"></div>
<div style="left:103px;top:734px;width:2px;height:2px;background:#0a2a70"></div>
<div style="left:104px;top:737px;width:2px;height:2px;background:#0a2a70"></div>
<div style="left:103px;top:740px;width:2px;height:2px;background:#0a2a70"></div>
<div style="left:113.5px;top:717.5px;width:131px;height:23.5px;background:linear-gradient(#3c81f3,#3877ef 20%,#3670ea 80%,#2e5fd0);border-radius:3px;box-shadow:inset 1px 1px 0 rgba(255,255,255,.25),inset -1px -1px 0 rgba(0,0,30,.3)"></div>
<svg style="left:122px;top:721px" width="14" height="14"><rect x="0.5" y="2" width="13.5" height="10" rx="1.5" fill="#8ad0f8" stroke="#e8f6ff" stroke-width="1"/><path d="M3 5H11M3 7H11M4 9.5H10" stroke="#fff" stroke-width="0.9" stroke-dasharray="1 0.8"/></svg>
<div class="t" style="left:141.5px;top:723.8px;font-size:11px;color:#fff">On-Screen Keyb...</div>
<div style="left:247px;top:717.5px;width:132px;height:23.5px;background:linear-gradient(#3c81f3,#3877ef 20%,#3670ea 80%,#2e5fd0);border-radius:3px;box-shadow:inset 1px 1px 0 rgba(255,255,255,.25),inset -1px -1px 0 rgba(0,0,30,.3)"></div>
<svg style="left:256px;top:721px" width="17" height="17"><defs><radialGradient id="gl" cx="40%" cy="35%" r="65%"><stop offset="0" stop-color="#a0e0ff"/><stop offset="0.5" stop-color="#2a80e0"/><stop offset="1" stop-color="#0a2a80"/></radialGradient></defs><circle cx="8.5" cy="8.5" r="6.8" fill="url(#gl)"/><path d="M4 4Q7 2.5 9 5Q7 8 6 12Q3 10 3 7Z" fill="#30b030"/><path d="M11 4Q14.5 6 14 10Q12 10 11 7Z" fill="#30a030"/><path d="M9 12Q11 11 12 13Q10 15 9 12Z" fill="#30a030"/><ellipse cx="8.5" cy="8.5" rx="8" ry="3.2" transform="rotate(-40 8.5 8.5)" fill="none" stroke="#c0f0ff" stroke-width="0.9"/></svg>
<div class="t" style="left:275px;top:723.8px;font-size:11px;color:#fff">Web</div>
<div style="left:381px;top:717.5px;width:132px;height:23.5px;background:linear-gradient(#3c81f3,#3877ef 20%,#3670ea 80%,#2e5fd0);border-radius:3px;box-shadow:inset 1px 1px 0 rgba(255,255,255,.25),inset -1px -1px 0 rgba(0,0,30,.3)"></div>
<svg style="left:389px;top:721px" width="17" height="15"><path d="M0.5 2.5H6L7.5 4H15V13.5H0.5Z" fill="#f8d870" stroke="#b08a20" stroke-width="0.8"/><path d="M0.5 13.5L3 6.5H16.5L14.5 13.5Z" fill="#fde890" stroke="#b08a20" stroke-width="0.8"/></svg>
<div class="t" style="left:409px;top:723.8px;font-size:11px;color:#fff">Two Rode Toge...</div>
<div style="left:514.5px;top:717.5px;width:132.5px;height:23.5px;background:linear-gradient(#3c81f3,#3877ef 20%,#3670ea 80%,#2e5fd0);border-radius:3px;box-shadow:inset 1px 1px 0 rgba(255,255,255,.25),inset -1px -1px 0 rgba(0,0,30,.3)"></div>
<svg style="left:523px;top:720px" width="16" height="16"><circle cx="8" cy="8" r="7" fill="#2a5ab0"/><path d="M2 6Q4 1 9 1Q15 2 15 8Q15 14 8 15Q2 14 1 9Q3 12 7 12Q12 11 11 7Q8 9 6 6Q8 4 5 3Q3 4 2 6Z" fill="#f07a20"/></svg>
<div class="t" style="left:542.5px;top:723.8px;font-size:11px;color:#fff">Editing Subtitles...</div>
<div style="left:648px;top:717.5px;width:134px;height:23.5px;background:linear-gradient(#3c81f3,#3877ef 20%,#3670ea 80%,#2e5fd0);border-radius:3px;box-shadow:inset 1px 1px 0 rgba(255,255,255,.25),inset -1px -1px 0 rgba(0,0,30,.3)"></div>
<svg style="left:657px;top:720px" width="17" height="17"><path d="M8.5 0.5L16 4.5V12.5L8.5 16.5L1 12.5V4.5Z" fill="#c02a2a" stroke="#501010" stroke-width="0.8"/><ellipse cx="8.5" cy="8.5" rx="4.5" ry="3" fill="#fff"/><circle cx="8.5" cy="8.5" r="1.8" fill="#200"/><path d="M2 7Q8.5 2 15 7" stroke="#300" stroke-width="1" fill="none"/></svg>
<div class="t" style="left:676px;top:723.8px;font-size:11px;color:#fff">* Inserting previ...</div>
<div style="left:792px;top:719px;width:2px;height:2px;background:#0a2a70"></div>
<div style="left:791px;top:722px;width:2px;height:2px;background:#0a2a70"></div>
<div style="left:792px;top:725px;width:2px;height:2px;background:#0a2a70"></div>
<div style="left:791px;top:728px;width:2px;height:2px;background:#0a2a70"></div>
<div style="left:792px;top:731px;width:2px;height:2px;background:#0a2a70"></div>
<div style="left:791px;top:734px;width:2px;height:2px;background:#0a2a70"></div>
<div style="left:792px;top:737px;width:2px;height:2px;background:#0a2a70"></div>
<div style="left:791px;top:740px;width:2px;height:2px;background:#0a2a70"></div>
<div style="left:801.5px;top:721px;width:17px;height:16px;background:#2a5ac8"></div>
<div class="t" style="left:803px;top:724px;font-size:11px;color:#fff">EN</div>
<div style="left:837px;top:710px;width:179px;height:33px;background:linear-gradient(#0c59b9 0%,#139ee9 6%,#18b5f2 12%,#139beb 50%,#1290e8 88%,#0d8dea 100%);border-left:1px solid #1042af"></div>
<div style="left:828.5px;top:721.5px;width:18px;height:18px;background:radial-gradient(circle at 40% 35%,#80b8ff,#2a6ae0);border:1px solid #e0f0ff;border-radius:50%"></div>
<svg style="left:833px;top:725px" width="9" height="10" viewBox="0 0 9 10"><path d="M6 1L2 5L6 9" stroke="#fff" stroke-width="2" fill="none"/></svg>
<svg style="left:849px;top:721px" width="16" height="16" viewBox="0 0 16 16"><circle cx="8" cy="8" r="7" fill="#fff"/><circle cx="8" cy="8" r="6" fill="none" stroke="#d02020" stroke-width="1.5"/><circle cx="8" cy="8" r="3.3" fill="#d02020"/></svg>
<svg style="left:867px;top:720px" width="17" height="17" viewBox="0 0 17 17"><rect x="6" y="1" width="9" height="7" fill="#a0c8f0" stroke="#4070b0" stroke-width="0.8"/><rect x="1" y="7" width="9" height="7" fill="#c0e0ff" stroke="#4070b0" stroke-width="0.8"/><rect x="3" y="14" width="6" height="2" fill="#8098b8"/></svg>
<svg style="left:887px;top:720px" width="17" height="17" viewBox="0 0 17 17"><ellipse cx="8.5" cy="11" rx="8" ry="4" fill="#3a9a3a"/><circle cx="9" cy="7" r="6" fill="#2a6ad8"/><path d="M3 12Q9 9 16 12" stroke="#f0c020" stroke-width="2" fill="none"/><path d="M8 4V10M5 8L8 11L11 8" stroke="#20c040" stroke-width="2" fill="none"/></svg>
<svg style="left:903px;top:720px" width="17" height="17" viewBox="0 0 17 17"><circle cx="8.5" cy="8.5" r="8" fill="#6ab830"/><circle cx="8.5" cy="8.5" r="6.5" fill="#80c840"/><path d="M5 4V10Q5 13 8 13Q11 13 11 10V4" stroke="#fff" stroke-width="2.3" fill="none"/><path d="M11 4V13" stroke="#fff" stroke-width="2.3"/></svg>
<svg style="left:920px;top:720px" width="17" height="17" viewBox="0 0 17 17"><rect x="0.5" y="0.5" width="16" height="16" fill="#e00a14"/><path d="M3 14L8 3L13 12Q11 14 9 11" stroke="#fff" stroke-width="2" fill="none"/></svg>
<svg style="left:937px;top:719px" width="17" height="18" viewBox="0 0 17 18"><path d="M14 4Q10 0 5 3Q0 7 2 13Q5 17 11 16L14 13Q10 15 7 13Q4 10 6 6Q9 3 12 6Z" fill="#e03a20"/><path d="M15 2L5 12" stroke="#f0d090" stroke-width="3"/><path d="M6 11L2 16" stroke="#c09050" stroke-width="4"/></svg>
<svg style="left:957px;top:720px" width="14" height="16" viewBox="0 0 14 16"><ellipse cx="7" cy="3" rx="6" ry="2.2" fill="#f0f0f0" stroke="#204080" stroke-width="0.8"/><path d="M1 3V13Q7 16 13 13V3" fill="#a8d8ff" stroke="#204080" stroke-width="0.8"/><path d="M1 6.5Q7 9 13 6.5M1 10Q7 12.5 13 10" stroke="#204080" stroke-width="0.8" fill="none"/></svg>
<div class="t" style="left:979px;top:724px;font-size:12px;color:#fff">10:31</div>
<svg style="left:692px;top:487px" width="19" height="24" viewBox="0 0 19 24"><path d="M5.5 2.5Q7 0.6 8.5 2.5V5.5H10.5L11 6.5H13L14 7.5H15.5L17.5 9V16L16 20V22.5H7V20L1.5 11.5V10L3.5 9.5L5.5 11.5Z" fill="#fff" stroke="#000" stroke-width="1.3" stroke-linejoin="round"/><path d="M8.5 5.5V10.5M11 6.5V10.5M13.8 7.5V11" stroke="#000" stroke-width="1.1"/></svg>
</body></html>
